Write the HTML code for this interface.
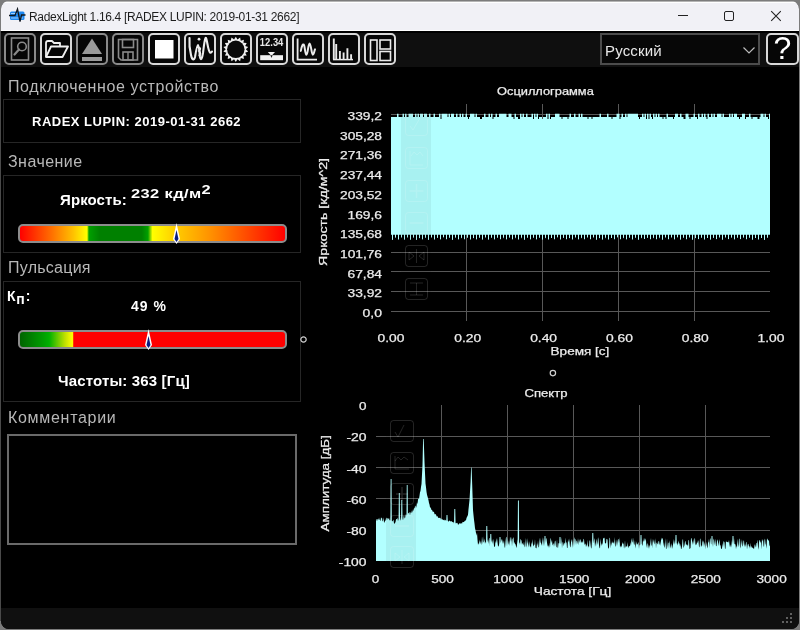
<!DOCTYPE html>
<html><head><meta charset="utf-8">
<style>
*{margin:0;padding:0;box-sizing:border-box}
html,body{width:800px;height:630px;overflow:hidden;background:#7c7c7c;font-family:"Liberation Sans",sans-serif}
#win{will-change:transform;position:absolute;left:1px;top:1px;width:798px;height:628px;border-radius:8px;overflow:hidden;background:#000}
.abs{position:absolute}
#title{position:absolute;left:0;top:0;width:798px;height:30px;background:#f1f1f6;border-bottom:1px solid #fff;border-top:1px solid #b4b4b4;box-shadow:inset 0 1px 0 #fff}
#ttxt{position:absolute;left:28px;top:8px;font-size:12px;color:#1e1e1e;white-space:nowrap;letter-spacing:-0.32px}
#toolbar{position:absolute;left:0;top:32px;width:798px;height:34px;background:#0f0f0f}
.btn{position:absolute;top:32px;width:32px;height:32px;border:2px solid #d8d8d8;border-radius:5px;background:#060606}
.btn.dis{border-color:#8a8a8a}
.btn svg{position:absolute;left:-2px;top:-2px}
.hdr{position:absolute;left:8px;font-size:16px;color:#b8b8b8;white-space:nowrap}
.box{position:absolute;left:2px;width:298px;border:1px solid #262626}
.bold{font-weight:bold;color:#fff;white-space:nowrap;position:absolute}
.bar{position:absolute;left:17px;width:269px;height:19px;border:2px solid #8c8c8c;border-radius:5px;overflow:hidden}
</style></head><body>
<div style="position:absolute;left:0;top:31px;width:1px;height:590px;background:#4a4a4a"></div>
<div id="win">
  <div id="title">
    <svg class="abs" style="left:8px;top:5px" width="18" height="16" viewBox="0 0 18 16">
      <rect x="1" y="4.5" width="14.5" height="8.5" rx="1.5" fill="#1e88f0"/>
      <rect x="2" y="6" width="6" height="1" fill="#9fd0ff"/>
      <rect x="2" y="10.5" width="12" height="1" fill="#9fd0ff"/>
      <polyline points="0,8.5 6,8.5 8.5,2 11,14.5 12.5,8 16.5,8" fill="none" stroke="#101820" stroke-width="1.3"/>
    </svg>
    <div id="ttxt">RadexLight 1.16.4 [RADEX LUPIN: 2019-01-31 2662]</div>
    <div class="abs" style="left:677px;top:13px;width:10px;height:1px;background:#222"></div>
    <div class="abs" style="left:723px;top:9px;width:10px;height:10px;border:1px solid #222;border-radius:2px"></div>
    <svg class="abs" style="left:769px;top:8px" width="12" height="12" viewBox="0 0 12 12"><path d="M1.2,1.2 L10.8,10.8 M10.8,1.2 L1.2,10.8" stroke="#222" stroke-width="1.1"/></svg>
  </div>
  <div id="toolbar"></div>

  <!-- toolbar buttons: window coords = page - 1 -->
  <div class="btn dis" style="left:3px">
    <svg width="32" height="32" viewBox="0 0 32 32"><rect x="7.5" y="5" width="17" height="22" fill="none" stroke="#8a8a8a" stroke-width="1.6"/><circle cx="18" cy="13.5" r="4.3" fill="none" stroke="#8a8a8a" stroke-width="1.6"/><path d="M15,16.5 L10.5,21.5" stroke="#8a8a8a" stroke-width="2.2" stroke-linecap="round"/></svg>
  </div>
  <div class="btn" style="left:39px">
    <svg width="32" height="32" viewBox="0 0 32 32"><path d="M6,24 L6,10 Q6,8 8,8 L12,8 L14,10 L20,10 L20,13" fill="none" stroke="#f0f0f0" stroke-width="1.8" stroke-linejoin="round"/><path d="M6,24 L11,13.5 L28,13.5 L22.5,24 Z" fill="none" stroke="#f0f0f0" stroke-width="1.8" stroke-linejoin="round"/></svg>
  </div>
  <div class="btn dis" style="left:75px">
    <svg width="32" height="32" viewBox="0 0 32 32"><path d="M16,5.5 L26,21 L6,21 Z" fill="#9a9a9a"/><rect x="6" y="24" width="20" height="4" fill="#9a9a9a"/></svg>
  </div>
  <div class="btn dis" style="left:111px">
    <svg width="32" height="32" viewBox="0 0 32 32"><path d="M6.5,6.5 L25.5,6.5 L25.5,27 L9,27 L6.5,24.5 Z" fill="none" stroke="#8a8a8a" stroke-width="1.6"/><rect x="10.5" y="6.5" width="11" height="8" fill="none" stroke="#8a8a8a" stroke-width="1.6"/><rect x="11" y="19" width="10" height="8" fill="none" stroke="#8a8a8a" stroke-width="1.6"/><path d="M16,19 L16,27" stroke="#8a8a8a" stroke-width="1.4"/></svg>
  </div>
  <div class="btn" style="left:147px">
    <svg width="32" height="32" viewBox="0 0 32 32"><rect x="7" y="7" width="18.5" height="18.5" fill="#fff"/></svg>
  </div>
  <div class="btn" style="left:183px">
    <svg width="32" height="32" viewBox="0 0 32 32"><path d="M5.5,5 C5,12 6,18 7,22 C8,27 10,28 11,24 C12,18 13,12 14,12 C15,12 15.5,20 16,24 C17,28 18,26 19,20 C20,12 21,4 22,5 C23,6 24,18 26,19.5 C27,20 27.5,19 28,18.5" fill="none" stroke="#ececec" stroke-width="2.1" stroke-linecap="round"/><circle cx="15" cy="6.2" r="1.4" fill="#ececec"/><path d="M14,14.5 C17,14 17,17 15,18 C17,19 17,22 14.5,22.5" fill="none" stroke="#ececec" stroke-width="1.5"/></svg>
  </div>
  <div class="btn" style="left:219px">
    <svg width="32" height="32" viewBox="0 0 32 32"><path d="M15.80,3.70 L17.54,6.45 L20.11,4.46 L20.80,7.64 L23.90,6.65 L23.46,9.87 L26.71,10.00 L25.20,12.88 L28.21,14.11 L25.80,16.30 L28.21,18.49 L25.20,19.72 L26.71,22.60 L23.46,22.73 L23.90,25.95 L20.80,24.96 L20.11,28.14 L17.54,26.15 L15.80,28.90 L14.06,26.15 L11.49,28.14 L10.80,24.96 L7.70,25.95 L8.14,22.73 L4.89,22.60 L6.40,19.72 L3.39,18.49 L5.80,16.30 L3.39,14.11 L6.40,12.88 L4.89,10.00 L8.14,9.87 L7.70,6.65 L10.80,7.64 L11.49,4.46 L14.06,6.45 Z" fill="#f0f0f0"/><circle cx="15.8" cy="16.3" r="8.7" fill="#0a0a0a"/></svg>
  </div>
  <div class="btn" style="left:255px">
    <svg width="32" height="32" viewBox="0 0 32 32"><text x="15.6" y="13.4" font-family="Liberation Sans" font-size="10.4" font-weight="bold" fill="#e8e8e8" text-anchor="middle" textLength="23.5" lengthAdjust="spacingAndGlyphs">12.34</text><rect x="4.2" y="22.2" width="22.8" height="5" fill="#f0f0f0"/><path d="M11.8,19 L19,19 L15.4,23 Z" fill="#f0f0f0"/><path d="M14.4,22.2 L16.6,22.2 L15.5,25 Z" fill="#111"/></svg>
  </div>
  <div class="btn" style="left:291px">
    <svg width="32" height="32" viewBox="0 0 32 32"><path d="M5.6,5.5 L5.6,26.6 L25,26.6" fill="none" stroke="#eaeaea" stroke-width="1.8"/><path d="M8.8,17.9 C10,12 11,11 11.8,11.5 C13,13 13,21.7 14.4,21.7 C16,21.7 16,10.4 17.6,10.4 C19,10.4 19.5,21.7 20.8,21.7 C22,21.7 22.5,17 23,16.3" fill="none" stroke="#eaeaea" stroke-width="2" stroke-linecap="round"/></svg>
  </div>
  <div class="btn" style="left:327px">
    <svg width="32" height="32" viewBox="0 0 32 32"><path d="M5,26.6 L25,26.6" stroke="#eaeaea" stroke-width="1.5"/><path d="M5.8,5.5 V26.6 M8.2,10.9 V26.6 M11.9,17.9 V26.6 M15.6,19.5 V26.6 M19.4,15.2 V26.6 M23.1,21.2 V26.6" stroke="#eaeaea" stroke-width="1.9"/></svg>
  </div>
  <div class="btn" style="left:363px">
    <svg width="32" height="32" viewBox="0 0 32 32"><rect x="6.5" y="7" width="6.5" height="20.5" fill="none" stroke="#eaeaea" stroke-width="1.6"/><rect x="16" y="7" width="10.5" height="9" fill="none" stroke="#eaeaea" stroke-width="1.6"/><rect x="16" y="18.5" width="10.5" height="9" fill="none" stroke="#eaeaea" stroke-width="1.6"/></svg>
  </div>

  <!-- language combo -->
  <div class="abs" style="left:599px;top:32px;width:160px;height:32px;border:2px solid #4c4c4c;background:#070707">
    <div class="abs" style="left:3px;top:7px;font-size:15px;color:#e8e8e8;letter-spacing:0.15px">Русский</div>
    <svg class="abs" style="left:140px;top:10px" width="14" height="10" viewBox="0 0 14 10"><path d="M1.5,2.5 L7,8 L12.5,2.5" fill="none" stroke="#bbb" stroke-width="1.2"/></svg>
  </div>
  <div class="btn" style="left:765px;width:33px">
    <div class="abs" style="left:0px;top:-5px;width:29px;text-align:center;font-size:32px;color:#fff">?</div>
  </div>

  <!-- left panel -->
  <div class="hdr" style="top:77px;left:7px;letter-spacing:0.6px">Подключенное устройство</div>
  <div class="box" style="top:98px;height:44px"></div>
  <div class="bold" style="left:31px;top:113px;font-size:13px;letter-spacing:0.5px">RADEX LUPIN: 2019-01-31 2662</div>

  <div class="hdr" style="top:152px;left:7px;letter-spacing:0.45px">Значение</div>
  <div class="box" style="top:174px;height:78px"></div>
  <div class="bold" style="left:59px;top:190px;font-size:15px;letter-spacing:0.1px">Яркость:</div>
  <div class="bold" style="left:130px;top:185px;font-size:13.5px;letter-spacing:0.3px;transform:scaleX(1.22);transform-origin:0 0">232 кд/м<span style="position:relative;top:-4px;letter-spacing:0">2</span></div>
  <div class="bar" style="top:223px;background:linear-gradient(to right,#ff0000 0%,#ff7000 12%,#ffc000 20%,#ffff00 25.3%,#00a000 26%,#008000 30%,#008000 46%,#00a000 48.3%,#ffff00 50%,#ffd000 58%,#ff9000 72%,#ff0000 100%)"></div>
  <svg class="abs" style="left:169px;top:221px" width="14" height="23" viewBox="0 0 14 23"><path d="M6.5,1 L10,17 L6.5,22 L3,17 Z" fill="#fff"/><path d="M6.5,8 L8.5,17 L6.5,20 L4.5,17 Z" fill="#0a1a80"/></svg>

  <div class="hdr" style="top:258px;left:7px;letter-spacing:0.25px">Пульсация</div>
  <div class="box" style="top:280px;height:121px"></div>
  <div class="bold" style="left:6px;top:287px;font-size:14px;letter-spacing:0.8px">К<span style="position:relative;top:3px">п</span>:</div>
  <div class="bold" style="left:130px;top:297px;font-size:14px;letter-spacing:1px">49 %</div>
  <div class="bar" style="top:329px;background:linear-gradient(to right,#006400 0%,#00a000 9%,#00b000 11%,#c0e000 17%,#ffff00 19.8%,#ff0000 20.3%,#ff0000 100%)"></div>
  <svg class="abs" style="left:141px;top:327px" width="14" height="23" viewBox="0 0 14 23"><path d="M6.5,1 L10,17 L6.5,22 L3,17 Z" fill="#fff"/><path d="M6.5,8 L8.5,17 L6.5,20 L4.5,17 Z" fill="#0a1a80"/></svg>
  <svg class="abs" style="left:298px;top:334px" width="10" height="10"><circle cx="4.5" cy="4.5" r="2.7" fill="none" stroke="#d0d0d0" stroke-width="1.2"/></svg>
  <div class="bold" style="left:57px;top:371px;font-size:15px;letter-spacing:0.15px">Частоты: 363 [Гц]</div>

  <div class="hdr" style="top:408px;left:7px;letter-spacing:0.7px">Комментарии</div>
  <div class="abs" style="left:6px;top:433px;width:290px;height:111px;border:2px solid #6a6a6a"></div>

  <!-- status bar -->
  <div class="abs" style="left:0;top:607px;width:798px;height:21px;background:#101010"></div>
  <svg class="abs" style="left:779px;top:610px" width="14" height="14"><g fill="#606060"><rect x="10" y="2" width="2" height="2"/><rect x="6" y="6" width="2" height="2"/><rect x="10" y="6" width="2" height="2"/><rect x="2" y="10" width="2" height="2"/><rect x="6" y="10" width="2" height="2"/><rect x="10" y="10" width="2" height="2"/></g></svg>

  <!-- charts: SVG in page coords, shifted -1 -->
  <svg class="abs" style="left:-1px;top:-1px" width="800" height="630" viewBox="0 0 800 630">
    <g stroke="#585858" stroke-width="1">
      <path d="M391,114.5 H770 M391,134.5 H770 M391,153.5 H770 M391,173.5 H770 M391,193.5 H770 M391,212.5 H770 M391,232.5 H770 M391,252.5 H770 M391,271.5 H770 M391,291.5 H770 M391,311.5 H770"/>
      <path d="M466.5,104 V321 M542.5,104 V321 M618.5,104 V321 M694.5,104 V321"/>
    </g>
    <path d="M391.0,117.0 L391.0,117.0 L391.5,117.0 L391.5,117.0 L392.0,117.0 L392.0,117.0 L392.5,117.0 L392.5,117.0 L393.0,117.0 L393.0,117.0 L393.5,117.0 L393.5,117.0 L394.0,117.0 L394.0,117.0 L394.5,117.0 L394.5,117.0 L395.0,117.0 L395.0,117.0 L395.5,117.0 L395.5,117.0 L396.0,117.0 L396.0,117.0 L396.5,117.0 L396.5,117.0 L397.0,117.0 L397.0,113.8 L397.5,113.8 L397.5,113.8 L398.0,113.8 L398.0,113.8 L398.5,113.8 L398.5,117.0 L399.0,117.0 L399.0,117.0 L399.5,117.0 L399.5,117.0 L400.0,117.0 L400.0,117.0 L400.5,117.0 L400.5,117.0 L401.0,117.0 L401.0,117.0 L401.5,117.0 L401.5,117.0 L402.0,117.0 L402.0,117.0 L402.5,117.0 L402.5,113.8 L403.0,113.8 L403.0,113.8 L403.5,113.8 L403.5,113.8 L404.0,113.8 L404.0,117.0 L404.5,117.0 L404.5,117.0 L405.0,117.0 L405.0,113.8 L405.5,113.8 L405.5,113.8 L406.0,113.8 L406.0,113.8 L406.5,113.8 L406.5,117.0 L407.0,117.0 L407.0,117.0 L407.5,117.0 L407.5,117.0 L408.0,117.0 L408.0,117.0 L408.5,117.0 L408.5,113.8 L409.0,113.8 L409.0,113.8 L409.5,113.8 L409.5,113.8 L410.0,113.8 L410.0,113.8 L410.5,113.8 L410.5,113.8 L411.0,113.8 L411.0,113.8 L411.5,113.8 L411.5,113.8 L412.0,113.8 L412.0,113.8 L412.5,113.8 L412.5,113.8 L413.0,113.8 L413.0,117.0 L413.5,117.0 L413.5,117.0 L414.0,117.0 L414.0,117.0 L414.5,117.0 L414.5,117.0 L415.0,117.0 L415.0,113.8 L415.5,113.8 L415.5,113.8 L416.0,113.8 L416.0,113.8 L416.5,113.8 L416.5,117.0 L417.0,117.0 L417.0,117.0 L417.5,117.0 L417.5,113.8 L418.0,113.8 L418.0,113.8 L418.5,113.8 L418.5,113.8 L419.0,113.8 L419.0,117.0 L419.5,117.0 L419.5,117.0 L420.0,117.0 L420.0,113.8 L420.5,113.8 L420.5,113.8 L421.0,113.8 L421.0,113.8 L421.5,113.8 L421.5,113.8 L422.0,113.8 L422.0,113.8 L422.5,113.8 L422.5,113.8 L423.0,113.8 L423.0,117.0 L423.5,117.0 L423.5,117.0 L424.0,117.0 L424.0,113.8 L424.5,113.8 L424.5,113.8 L425.0,113.8 L425.0,113.8 L425.5,113.8 L425.5,113.8 L426.0,113.8 L426.0,113.8 L426.5,113.8 L426.5,113.8 L427.0,113.8 L427.0,117.0 L427.5,117.0 L427.5,117.0 L428.0,117.0 L428.0,117.0 L428.5,117.0 L428.5,117.0 L429.0,117.0 L429.0,113.8 L429.5,113.8 L429.5,113.8 L430.0,113.8 L430.0,113.8 L430.5,113.8 L430.5,117.0 L431.0,117.0 L431.0,117.0 L431.5,117.0 L431.5,117.0 L432.0,117.0 L432.0,117.0 L432.5,117.0 L432.5,117.0 L433.0,117.0 L433.0,117.0 L433.5,117.0 L433.5,113.8 L434.0,113.8 L434.0,113.8 L434.5,113.8 L434.5,113.8 L435.0,113.8 L435.0,117.0 L435.5,117.0 L435.5,117.0 L436.0,117.0 L436.0,117.0 L436.5,117.0 L436.5,117.0 L437.0,117.0 L437.0,117.0 L437.5,117.0 L437.5,117.0 L438.0,117.0 L438.0,117.0 L438.5,117.0 L438.5,117.0 L439.0,117.0 L439.0,113.8 L439.5,113.8 L439.5,113.8 L440.0,113.8 L440.0,113.8 L440.5,113.8 L440.5,119.0 L441.0,119.0 L441.0,119.0 L441.5,119.0 L441.5,113.8 L442.0,113.8 L442.0,113.8 L442.5,113.8 L442.5,113.8 L443.0,113.8 L443.0,113.8 L443.5,113.8 L443.5,113.8 L444.0,113.8 L444.0,113.8 L444.5,113.8 L444.5,113.8 L445.0,113.8 L445.0,113.8 L445.5,113.8 L445.5,113.8 L446.0,113.8 L446.0,113.8 L446.5,113.8 L446.5,113.8 L447.0,113.8 L447.0,113.8 L447.5,113.8 L447.5,117.0 L448.0,117.0 L448.0,117.0 L448.5,117.0 L448.5,113.8 L449.0,113.8 L449.0,113.8 L449.5,113.8 L449.5,113.8 L450.0,113.8 L450.0,117.0 L450.5,117.0 L450.5,117.0 L451.0,117.0 L451.0,113.8 L451.5,113.8 L451.5,113.8 L452.0,113.8 L452.0,113.8 L452.5,113.8 L452.5,113.8 L453.0,113.8 L453.0,113.8 L453.5,113.8 L453.5,113.8 L454.0,113.8 L454.0,117.0 L454.5,117.0 L454.5,117.0 L455.0,117.0 L455.0,117.0 L455.5,117.0 L455.5,117.0 L456.0,117.0 L456.0,113.8 L456.5,113.8 L456.5,113.8 L457.0,113.8 L457.0,113.8 L457.5,113.8 L457.5,117.0 L458.0,117.0 L458.0,117.0 L458.5,117.0 L458.5,117.0 L459.0,117.0 L459.0,117.0 L459.5,117.0 L459.5,113.8 L460.0,113.8 L460.0,113.8 L460.5,113.8 L460.5,113.8 L461.0,113.8 L461.0,117.0 L461.5,117.0 L461.5,117.0 L462.0,117.0 L462.0,113.8 L462.5,113.8 L462.5,113.8 L463.0,113.8 L463.0,113.8 L463.5,113.8 L463.5,117.0 L464.0,117.0 L464.0,117.0 L464.5,117.0 L464.5,117.0 L465.0,117.0 L465.0,117.0 L465.5,117.0 L465.5,113.8 L466.0,113.8 L466.0,113.8 L466.5,113.8 L466.5,113.8 L467.0,113.8 L467.0,117.0 L467.5,117.0 L467.5,117.0 L468.0,117.0 L468.0,119.0 L468.5,119.0 L468.5,119.0 L469.0,119.0 L469.0,117.0 L469.5,117.0 L469.5,117.0 L470.0,117.0 L470.0,113.8 L470.5,113.8 L470.5,113.8 L471.0,113.8 L471.0,113.8 L471.5,113.8 L471.5,113.8 L472.0,113.8 L472.0,113.8 L472.5,113.8 L472.5,113.8 L473.0,113.8 L473.0,113.8 L473.5,113.8 L473.5,113.8 L474.0,113.8 L474.0,113.8 L474.5,113.8 L474.5,117.0 L475.0,117.0 L475.0,117.0 L475.5,117.0 L475.5,113.8 L476.0,113.8 L476.0,113.8 L476.5,113.8 L476.5,113.8 L477.0,113.8 L477.0,117.0 L477.5,117.0 L477.5,117.0 L478.0,117.0 L478.0,117.0 L478.5,117.0 L478.5,117.0 L479.0,117.0 L479.0,117.0 L479.5,117.0 L479.5,117.0 L480.0,117.0 L480.0,119.0 L480.5,119.0 L480.5,119.0 L481.0,119.0 L481.0,119.0 L481.5,119.0 L481.5,119.0 L482.0,119.0 L482.0,117.0 L482.5,117.0 L482.5,117.0 L483.0,117.0 L483.0,117.0 L483.5,117.0 L483.5,117.0 L484.0,117.0 L484.0,113.8 L484.5,113.8 L484.5,113.8 L485.0,113.8 L485.0,113.8 L485.5,113.8 L485.5,117.0 L486.0,117.0 L486.0,117.0 L486.5,117.0 L486.5,117.0 L487.0,117.0 L487.0,117.0 L487.5,117.0 L487.5,117.0 L488.0,117.0 L488.0,117.0 L488.5,117.0 L488.5,113.8 L489.0,113.8 L489.0,113.8 L489.5,113.8 L489.5,113.8 L490.0,113.8 L490.0,117.0 L490.5,117.0 L490.5,117.0 L491.0,117.0 L491.0,113.8 L491.5,113.8 L491.5,113.8 L492.0,113.8 L492.0,113.8 L492.5,113.8 L492.5,119.0 L493.0,119.0 L493.0,119.0 L493.5,119.0 L493.5,117.0 L494.0,117.0 L494.0,117.0 L494.5,117.0 L494.5,117.0 L495.0,117.0 L495.0,117.0 L495.5,117.0 L495.5,113.8 L496.0,113.8 L496.0,113.8 L496.5,113.8 L496.5,113.8 L497.0,113.8 L497.0,117.0 L497.5,117.0 L497.5,117.0 L498.0,117.0 L498.0,117.0 L498.5,117.0 L498.5,117.0 L499.0,117.0 L499.0,113.8 L499.5,113.8 L499.5,113.8 L500.0,113.8 L500.0,113.8 L500.5,113.8 L500.5,113.8 L501.0,113.8 L501.0,113.8 L501.5,113.8 L501.5,113.8 L502.0,113.8 L502.0,113.8 L502.5,113.8 L502.5,113.8 L503.0,113.8 L503.0,113.8 L503.5,113.8 L503.5,113.8 L504.0,113.8 L504.0,113.8 L504.5,113.8 L504.5,113.8 L505.0,113.8 L505.0,113.8 L505.5,113.8 L505.5,113.8 L506.0,113.8 L506.0,113.8 L506.5,113.8 L506.5,117.0 L507.0,117.0 L507.0,117.0 L507.5,117.0 L507.5,117.0 L508.0,117.0 L508.0,117.0 L508.5,117.0 L508.5,113.8 L509.0,113.8 L509.0,113.8 L509.5,113.8 L509.5,113.8 L510.0,113.8 L510.0,113.8 L510.5,113.8 L510.5,113.8 L511.0,113.8 L511.0,113.8 L511.5,113.8 L511.5,117.0 L512.0,117.0 L512.0,117.0 L512.5,117.0 L512.5,117.0 L513.0,117.0 L513.0,117.0 L513.5,117.0 L513.5,119.0 L514.0,119.0 L514.0,119.0 L514.5,119.0 L514.5,113.8 L515.0,113.8 L515.0,113.8 L515.5,113.8 L515.5,113.8 L516.0,113.8 L516.0,117.0 L516.5,117.0 L516.5,117.0 L517.0,117.0 L517.0,117.0 L517.5,117.0 L517.5,117.0 L518.0,117.0 L518.0,119.0 L518.5,119.0 L518.5,119.0 L519.0,119.0 L519.0,119.0 L519.5,119.0 L519.5,119.0 L520.0,119.0 L520.0,113.8 L520.5,113.8 L520.5,113.8 L521.0,113.8 L521.0,113.8 L521.5,113.8 L521.5,117.0 L522.0,117.0 L522.0,117.0 L522.5,117.0 L522.5,113.8 L523.0,113.8 L523.0,113.8 L523.5,113.8 L523.5,113.8 L524.0,113.8 L524.0,117.0 L524.5,117.0 L524.5,117.0 L525.0,117.0 L525.0,117.0 L525.5,117.0 L525.5,117.0 L526.0,117.0 L526.0,113.8 L526.5,113.8 L526.5,113.8 L527.0,113.8 L527.0,113.8 L527.5,113.8 L527.5,117.0 L528.0,117.0 L528.0,117.0 L528.5,117.0 L528.5,117.0 L529.0,117.0 L529.0,117.0 L529.5,117.0 L529.5,117.0 L530.0,117.0 L530.0,117.0 L530.5,117.0 L530.5,117.0 L531.0,117.0 L531.0,117.0 L531.5,117.0 L531.5,113.8 L532.0,113.8 L532.0,113.8 L532.5,113.8 L532.5,113.8 L533.0,113.8 L533.0,119.0 L533.5,119.0 L533.5,119.0 L534.0,119.0 L534.0,113.8 L534.5,113.8 L534.5,113.8 L535.0,113.8 L535.0,113.8 L535.5,113.8 L535.5,117.0 L536.0,117.0 L536.0,117.0 L536.5,117.0 L536.5,113.8 L537.0,113.8 L537.0,113.8 L537.5,113.8 L537.5,113.8 L538.0,113.8 L538.0,119.0 L538.5,119.0 L538.5,119.0 L539.0,119.0 L539.0,117.0 L539.5,117.0 L539.5,117.0 L540.0,117.0 L540.0,117.0 L540.5,117.0 L540.5,117.0 L541.0,117.0 L541.0,117.0 L541.5,117.0 L541.5,117.0 L542.0,117.0 L542.0,119.0 L542.5,119.0 L542.5,119.0 L543.0,119.0 L543.0,117.0 L543.5,117.0 L543.5,117.0 L544.0,117.0 L544.0,117.0 L544.5,117.0 L544.5,117.0 L545.0,117.0 L545.0,117.0 L545.5,117.0 L545.5,117.0 L546.0,117.0 L546.0,113.8 L546.5,113.8 L546.5,113.8 L547.0,113.8 L547.0,113.8 L547.5,113.8 L547.5,119.0 L548.0,119.0 L548.0,119.0 L548.5,119.0 L548.5,113.8 L549.0,113.8 L549.0,113.8 L549.5,113.8 L549.5,113.8 L550.0,113.8 L550.0,119.0 L550.5,119.0 L550.5,119.0 L551.0,119.0 L551.0,117.0 L551.5,117.0 L551.5,117.0 L552.0,117.0 L552.0,117.0 L552.5,117.0 L552.5,117.0 L553.0,117.0 L553.0,117.0 L553.5,117.0 L553.5,117.0 L554.0,117.0 L554.0,117.0 L554.5,117.0 L554.5,117.0 L555.0,117.0 L555.0,113.8 L555.5,113.8 L555.5,113.8 L556.0,113.8 L556.0,113.8 L556.5,113.8 L556.5,113.8 L557.0,113.8 L557.0,113.8 L557.5,113.8 L557.5,113.8 L558.0,113.8 L558.0,113.8 L558.5,113.8 L558.5,113.8 L559.0,113.8 L559.0,113.8 L559.5,113.8 L559.5,117.0 L560.0,117.0 L560.0,117.0 L560.5,117.0 L560.5,117.0 L561.0,117.0 L561.0,117.0 L561.5,117.0 L561.5,119.0 L562.0,119.0 L562.0,119.0 L562.5,119.0 L562.5,117.0 L563.0,117.0 L563.0,117.0 L563.5,117.0 L563.5,117.0 L564.0,117.0 L564.0,117.0 L564.5,117.0 L564.5,117.0 L565.0,117.0 L565.0,117.0 L565.5,117.0 L565.5,117.0 L566.0,117.0 L566.0,117.0 L566.5,117.0 L566.5,117.0 L567.0,117.0 L567.0,117.0 L567.5,117.0 L567.5,119.0 L568.0,119.0 L568.0,119.0 L568.5,119.0 L568.5,117.0 L569.0,117.0 L569.0,117.0 L569.5,117.0 L569.5,113.8 L570.0,113.8 L570.0,113.8 L570.5,113.8 L570.5,113.8 L571.0,113.8 L571.0,117.0 L571.5,117.0 L571.5,117.0 L572.0,117.0 L572.0,117.0 L572.5,117.0 L572.5,117.0 L573.0,117.0 L573.0,117.0 L573.5,117.0 L573.5,117.0 L574.0,117.0 L574.0,113.8 L574.5,113.8 L574.5,113.8 L575.0,113.8 L575.0,113.8 L575.5,113.8 L575.5,117.0 L576.0,117.0 L576.0,117.0 L576.5,117.0 L576.5,117.0 L577.0,117.0 L577.0,117.0 L577.5,117.0 L577.5,117.0 L578.0,117.0 L578.0,117.0 L578.5,117.0 L578.5,113.8 L579.0,113.8 L579.0,113.8 L579.5,113.8 L579.5,113.8 L580.0,113.8 L580.0,117.0 L580.5,117.0 L580.5,117.0 L581.0,117.0 L581.0,113.8 L581.5,113.8 L581.5,113.8 L582.0,113.8 L582.0,113.8 L582.5,113.8 L582.5,117.0 L583.0,117.0 L583.0,117.0 L583.5,117.0 L583.5,117.0 L584.0,117.0 L584.0,117.0 L584.5,117.0 L584.5,117.0 L585.0,117.0 L585.0,117.0 L585.5,117.0 L585.5,117.0 L586.0,117.0 L586.0,117.0 L586.5,117.0 L586.5,117.0 L587.0,117.0 L587.0,117.0 L587.5,117.0 L587.5,119.0 L588.0,119.0 L588.0,119.0 L588.5,119.0 L588.5,117.0 L589.0,117.0 L589.0,117.0 L589.5,117.0 L589.5,117.0 L590.0,117.0 L590.0,117.0 L590.5,117.0 L590.5,117.0 L591.0,117.0 L591.0,117.0 L591.5,117.0 L591.5,119.0 L592.0,119.0 L592.0,119.0 L592.5,119.0 L592.5,117.0 L593.0,117.0 L593.0,117.0 L593.5,117.0 L593.5,117.0 L594.0,117.0 L594.0,117.0 L594.5,117.0 L594.5,117.0 L595.0,117.0 L595.0,117.0 L595.5,117.0 L595.5,117.0 L596.0,117.0 L596.0,117.0 L596.5,117.0 L596.5,117.0 L597.0,117.0 L597.0,117.0 L597.5,117.0 L597.5,117.0 L598.0,117.0 L598.0,117.0 L598.5,117.0 L598.5,117.0 L599.0,117.0 L599.0,117.0 L599.5,117.0 L599.5,113.8 L600.0,113.8 L600.0,113.8 L600.5,113.8 L600.5,113.8 L601.0,113.8 L601.0,117.0 L601.5,117.0 L601.5,117.0 L602.0,117.0 L602.0,117.0 L602.5,117.0 L602.5,117.0 L603.0,117.0 L603.0,117.0 L603.5,117.0 L603.5,117.0 L604.0,117.0 L604.0,117.0 L604.5,117.0 L604.5,117.0 L605.0,117.0 L605.0,117.0 L605.5,117.0 L605.5,117.0 L606.0,117.0 L606.0,117.0 L606.5,117.0 L606.5,117.0 L607.0,117.0 L607.0,113.8 L607.5,113.8 L607.5,113.8 L608.0,113.8 L608.0,113.8 L608.5,113.8 L608.5,117.0 L609.0,117.0 L609.0,117.0 L609.5,117.0 L609.5,117.0 L610.0,117.0 L610.0,117.0 L610.5,117.0 L610.5,117.0 L611.0,117.0 L611.0,117.0 L611.5,117.0 L611.5,119.0 L612.0,119.0 L612.0,119.0 L612.5,119.0 L612.5,117.0 L613.0,117.0 L613.0,117.0 L613.5,117.0 L613.5,117.0 L614.0,117.0 L614.0,117.0 L614.5,117.0 L614.5,117.0 L615.0,117.0 L615.0,117.0 L615.5,117.0 L615.5,117.0 L616.0,117.0 L616.0,117.0 L616.5,117.0 L616.5,113.8 L617.0,113.8 L617.0,113.8 L617.5,113.8 L617.5,113.8 L618.0,113.8 L618.0,113.8 L618.5,113.8 L618.5,113.8 L619.0,113.8 L619.0,113.8 L619.5,113.8 L619.5,119.0 L620.0,119.0 L620.0,119.0 L620.5,119.0 L620.5,117.0 L621.0,117.0 L621.0,117.0 L621.5,117.0 L621.5,113.8 L622.0,113.8 L622.0,113.8 L622.5,113.8 L622.5,113.8 L623.0,113.8 L623.0,117.0 L623.5,117.0 L623.5,117.0 L624.0,117.0 L624.0,117.0 L624.5,117.0 L624.5,117.0 L625.0,117.0 L625.0,113.8 L625.5,113.8 L625.5,113.8 L626.0,113.8 L626.0,113.8 L626.5,113.8 L626.5,117.0 L627.0,117.0 L627.0,117.0 L627.5,117.0 L627.5,113.8 L628.0,113.8 L628.0,113.8 L628.5,113.8 L628.5,113.8 L629.0,113.8 L629.0,113.8 L629.5,113.8 L629.5,113.8 L630.0,113.8 L630.0,113.8 L630.5,113.8 L630.5,113.8 L631.0,113.8 L631.0,113.8 L631.5,113.8 L631.5,113.8 L632.0,113.8 L632.0,113.8 L632.5,113.8 L632.5,113.8 L633.0,113.8 L633.0,113.8 L633.5,113.8 L633.5,113.8 L634.0,113.8 L634.0,113.8 L634.5,113.8 L634.5,113.8 L635.0,113.8 L635.0,113.8 L635.5,113.8 L635.5,113.8 L636.0,113.8 L636.0,113.8 L636.5,113.8 L636.5,113.8 L637.0,113.8 L637.0,113.8 L637.5,113.8 L637.5,113.8 L638.0,113.8 L638.0,117.0 L638.5,117.0 L638.5,117.0 L639.0,117.0 L639.0,119.0 L639.5,119.0 L639.5,119.0 L640.0,119.0 L640.0,117.0 L640.5,117.0 L640.5,117.0 L641.0,117.0 L641.0,117.0 L641.5,117.0 L641.5,117.0 L642.0,117.0 L642.0,113.8 L642.5,113.8 L642.5,113.8 L643.0,113.8 L643.0,113.8 L643.5,113.8 L643.5,117.0 L644.0,117.0 L644.0,117.0 L644.5,117.0 L644.5,113.8 L645.0,113.8 L645.0,113.8 L645.5,113.8 L645.5,113.8 L646.0,113.8 L646.0,119.0 L646.5,119.0 L646.5,119.0 L647.0,119.0 L647.0,113.8 L647.5,113.8 L647.5,113.8 L648.0,113.8 L648.0,113.8 L648.5,113.8 L648.5,119.0 L649.0,119.0 L649.0,119.0 L649.5,119.0 L649.5,113.8 L650.0,113.8 L650.0,113.8 L650.5,113.8 L650.5,113.8 L651.0,113.8 L651.0,117.0 L651.5,117.0 L651.5,117.0 L652.0,117.0 L652.0,119.0 L652.5,119.0 L652.5,119.0 L653.0,119.0 L653.0,113.8 L653.5,113.8 L653.5,113.8 L654.0,113.8 L654.0,113.8 L654.5,113.8 L654.5,117.0 L655.0,117.0 L655.0,117.0 L655.5,117.0 L655.5,113.8 L656.0,113.8 L656.0,113.8 L656.5,113.8 L656.5,113.8 L657.0,113.8 L657.0,117.0 L657.5,117.0 L657.5,117.0 L658.0,117.0 L658.0,113.8 L658.5,113.8 L658.5,113.8 L659.0,113.8 L659.0,113.8 L659.5,113.8 L659.5,117.0 L660.0,117.0 L660.0,117.0 L660.5,117.0 L660.5,117.0 L661.0,117.0 L661.0,117.0 L661.5,117.0 L661.5,117.0 L662.0,117.0 L662.0,117.0 L662.5,117.0 L662.5,119.0 L663.0,119.0 L663.0,119.0 L663.5,119.0 L663.5,117.0 L664.0,117.0 L664.0,117.0 L664.5,117.0 L664.5,117.0 L665.0,117.0 L665.0,117.0 L665.5,117.0 L665.5,119.0 L666.0,119.0 L666.0,119.0 L666.5,119.0 L666.5,113.8 L667.0,113.8 L667.0,113.8 L667.5,113.8 L667.5,113.8 L668.0,113.8 L668.0,117.0 L668.5,117.0 L668.5,117.0 L669.0,117.0 L669.0,117.0 L669.5,117.0 L669.5,117.0 L670.0,117.0 L670.0,117.0 L670.5,117.0 L670.5,117.0 L671.0,117.0 L671.0,117.0 L671.5,117.0 L671.5,117.0 L672.0,117.0 L672.0,117.0 L672.5,117.0 L672.5,117.0 L673.0,117.0 L673.0,119.0 L673.5,119.0 L673.5,119.0 L674.0,119.0 L674.0,117.0 L674.5,117.0 L674.5,117.0 L675.0,117.0 L675.0,113.8 L675.5,113.8 L675.5,113.8 L676.0,113.8 L676.0,113.8 L676.5,113.8 L676.5,113.8 L677.0,113.8 L677.0,113.8 L677.5,113.8 L677.5,113.8 L678.0,113.8 L678.0,117.0 L678.5,117.0 L678.5,117.0 L679.0,117.0 L679.0,117.0 L679.5,117.0 L679.5,117.0 L680.0,117.0 L680.0,113.8 L680.5,113.8 L680.5,113.8 L681.0,113.8 L681.0,113.8 L681.5,113.8 L681.5,117.0 L682.0,117.0 L682.0,117.0 L682.5,117.0 L682.5,117.0 L683.0,117.0 L683.0,117.0 L683.5,117.0 L683.5,119.0 L684.0,119.0 L684.0,119.0 L684.5,119.0 L684.5,119.0 L685.0,119.0 L685.0,119.0 L685.5,119.0 L685.5,113.8 L686.0,113.8 L686.0,113.8 L686.5,113.8 L686.5,113.8 L687.0,113.8 L687.0,113.8 L687.5,113.8 L687.5,113.8 L688.0,113.8 L688.0,113.8 L688.5,113.8 L688.5,117.0 L689.0,117.0 L689.0,117.0 L689.5,117.0 L689.5,119.0 L690.0,119.0 L690.0,119.0 L690.5,119.0 L690.5,117.0 L691.0,117.0 L691.0,117.0 L691.5,117.0 L691.5,117.0 L692.0,117.0 L692.0,117.0 L692.5,117.0 L692.5,117.0 L693.0,117.0 L693.0,117.0 L693.5,117.0 L693.5,113.8 L694.0,113.8 L694.0,113.8 L694.5,113.8 L694.5,113.8 L695.0,113.8 L695.0,117.0 L695.5,117.0 L695.5,117.0 L696.0,117.0 L696.0,117.0 L696.5,117.0 L696.5,117.0 L697.0,117.0 L697.0,119.0 L697.5,119.0 L697.5,119.0 L698.0,119.0 L698.0,113.8 L698.5,113.8 L698.5,113.8 L699.0,113.8 L699.0,113.8 L699.5,113.8 L699.5,117.0 L700.0,117.0 L700.0,117.0 L700.5,117.0 L700.5,117.0 L701.0,117.0 L701.0,117.0 L701.5,117.0 L701.5,113.8 L702.0,113.8 L702.0,113.8 L702.5,113.8 L702.5,113.8 L703.0,113.8 L703.0,117.0 L703.5,117.0 L703.5,117.0 L704.0,117.0 L704.0,113.8 L704.5,113.8 L704.5,113.8 L705.0,113.8 L705.0,113.8 L705.5,113.8 L705.5,117.0 L706.0,117.0 L706.0,117.0 L706.5,117.0 L706.5,119.0 L707.0,119.0 L707.0,119.0 L707.5,119.0 L707.5,113.8 L708.0,113.8 L708.0,113.8 L708.5,113.8 L708.5,113.8 L709.0,113.8 L709.0,117.0 L709.5,117.0 L709.5,117.0 L710.0,117.0 L710.0,117.0 L710.5,117.0 L710.5,117.0 L711.0,117.0 L711.0,113.8 L711.5,113.8 L711.5,113.8 L712.0,113.8 L712.0,113.8 L712.5,113.8 L712.5,117.0 L713.0,117.0 L713.0,117.0 L713.5,117.0 L713.5,113.8 L714.0,113.8 L714.0,113.8 L714.5,113.8 L714.5,113.8 L715.0,113.8 L715.0,117.0 L715.5,117.0 L715.5,117.0 L716.0,117.0 L716.0,117.0 L716.5,117.0 L716.5,117.0 L717.0,117.0 L717.0,113.8 L717.5,113.8 L717.5,113.8 L718.0,113.8 L718.0,113.8 L718.5,113.8 L718.5,113.8 L719.0,113.8 L719.0,113.8 L719.5,113.8 L719.5,113.8 L720.0,113.8 L720.0,113.8 L720.5,113.8 L720.5,113.8 L721.0,113.8 L721.0,113.8 L721.5,113.8 L721.5,117.0 L722.0,117.0 L722.0,117.0 L722.5,117.0 L722.5,113.8 L723.0,113.8 L723.0,113.8 L723.5,113.8 L723.5,113.8 L724.0,113.8 L724.0,117.0 L724.5,117.0 L724.5,117.0 L725.0,117.0 L725.0,117.0 L725.5,117.0 L725.5,117.0 L726.0,117.0 L726.0,117.0 L726.5,117.0 L726.5,117.0 L727.0,117.0 L727.0,117.0 L727.5,117.0 L727.5,117.0 L728.0,117.0 L728.0,117.0 L728.5,117.0 L728.5,117.0 L729.0,117.0 L729.0,113.8 L729.5,113.8 L729.5,113.8 L730.0,113.8 L730.0,113.8 L730.5,113.8 L730.5,117.0 L731.0,117.0 L731.0,117.0 L731.5,117.0 L731.5,113.8 L732.0,113.8 L732.0,113.8 L732.5,113.8 L732.5,113.8 L733.0,113.8 L733.0,117.0 L733.5,117.0 L733.5,117.0 L734.0,117.0 L734.0,113.8 L734.5,113.8 L734.5,113.8 L735.0,113.8 L735.0,113.8 L735.5,113.8 L735.5,113.8 L736.0,113.8 L736.0,113.8 L736.5,113.8 L736.5,113.8 L737.0,113.8 L737.0,117.0 L737.5,117.0 L737.5,117.0 L738.0,117.0 L738.0,117.0 L738.5,117.0 L738.5,117.0 L739.0,117.0 L739.0,119.0 L739.5,119.0 L739.5,119.0 L740.0,119.0 L740.0,117.0 L740.5,117.0 L740.5,117.0 L741.0,117.0 L741.0,117.0 L741.5,117.0 L741.5,117.0 L742.0,117.0 L742.0,113.8 L742.5,113.8 L742.5,113.8 L743.0,113.8 L743.0,113.8 L743.5,113.8 L743.5,113.8 L744.0,113.8 L744.0,113.8 L744.5,113.8 L744.5,113.8 L745.0,113.8 L745.0,119.0 L745.5,119.0 L745.5,119.0 L746.0,119.0 L746.0,117.0 L746.5,117.0 L746.5,117.0 L747.0,117.0 L747.0,117.0 L747.5,117.0 L747.5,117.0 L748.0,117.0 L748.0,117.0 L748.5,117.0 L748.5,117.0 L749.0,117.0 L749.0,113.8 L749.5,113.8 L749.5,113.8 L750.0,113.8 L750.0,113.8 L750.5,113.8 L750.5,117.0 L751.0,117.0 L751.0,117.0 L751.5,117.0 L751.5,119.0 L752.0,119.0 L752.0,119.0 L752.5,119.0 L752.5,117.0 L753.0,117.0 L753.0,117.0 L753.5,117.0 L753.5,117.0 L754.0,117.0 L754.0,117.0 L754.5,117.0 L754.5,117.0 L755.0,117.0 L755.0,117.0 L755.5,117.0 L755.5,117.0 L756.0,117.0 L756.0,117.0 L756.5,117.0 L756.5,117.0 L757.0,117.0 L757.0,117.0 L757.5,117.0 L757.5,119.0 L758.0,119.0 L758.0,119.0 L758.5,119.0 L758.5,119.0 L759.0,119.0 L759.0,119.0 L759.5,119.0 L759.5,117.0 L760.0,117.0 L760.0,117.0 L760.5,117.0 L760.5,113.8 L761.0,113.8 L761.0,113.8 L761.5,113.8 L761.5,113.8 L762.0,113.8 L762.0,113.8 L762.5,113.8 L762.5,113.8 L763.0,113.8 L763.0,113.8 L763.5,113.8 L763.5,117.0 L764.0,117.0 L764.0,117.0 L764.5,117.0 L764.5,113.8 L765.0,113.8 L765.0,113.8 L765.5,113.8 L765.5,113.8 L766.0,113.8 L766.0,117.0 L766.5,117.0 L766.5,117.0 L767.0,117.0 L767.0,117.0 L767.5,117.0 L767.5,117.0 L768.0,117.0 L768.0,119.0 L768.5,119.0 L768.5,119.0 L769.0,119.0 L769.0,113.8 L769.5,113.8 L769.5,113.8 L770.0,113.8 L770.0,234.8 L769.5,234.8 L769.5,234.8 L769.0,234.8 L769.0,234.8 L768.5,234.8 L768.5,234.8 L768.0,234.8 L768.0,237.6 L767.5,237.6 L767.5,238.0 L767.0,238.0 L767.0,234.8 L766.5,234.8 L766.5,234.8 L766.0,234.8 L766.0,234.8 L765.5,234.8 L765.5,234.8 L765.0,234.8 L765.0,239.7 L764.5,239.7 L764.5,240.0 L764.0,240.0 L764.0,234.8 L763.5,234.8 L763.5,234.8 L763.0,234.8 L763.0,234.8 L762.5,234.8 L762.5,234.8 L762.0,234.8 L762.0,238.0 L761.5,238.0 L761.5,238.1 L761.0,238.1 L761.0,234.8 L760.5,234.8 L760.5,234.8 L760.0,234.8 L760.0,234.8 L759.5,234.8 L759.5,234.8 L759.0,234.8 L759.0,239.4 L758.5,239.4 L758.5,239.6 L758.0,239.6 L758.0,234.8 L757.5,234.8 L757.5,234.8 L757.0,234.8 L757.0,234.8 L756.5,234.8 L756.5,234.8 L756.0,234.8 L756.0,238.1 L755.5,238.1 L755.5,238.0 L755.0,238.0 L755.0,234.8 L754.5,234.8 L754.5,234.8 L754.0,234.8 L754.0,234.8 L753.5,234.8 L753.5,234.8 L753.0,234.8 L753.0,239.9 L752.5,239.9 L752.5,239.6 L752.0,239.6 L752.0,234.8 L751.5,234.8 L751.5,234.8 L751.0,234.8 L751.0,234.8 L750.5,234.8 L750.5,234.8 L750.0,234.8 L750.0,238.1 L749.5,238.1 L749.5,237.6 L749.0,237.6 L749.0,234.8 L748.5,234.8 L748.5,234.8 L748.0,234.8 L748.0,234.8 L747.5,234.8 L747.5,234.8 L747.0,234.8 L747.0,239.4 L746.5,239.4 L746.5,239.1 L746.0,239.1 L746.0,234.8 L745.5,234.8 L745.5,234.8 L745.0,234.8 L745.0,234.8 L744.5,234.8 L744.5,234.8 L744.0,234.8 L744.0,237.7 L743.5,237.7 L743.5,237.6 L743.0,237.6 L743.0,234.8 L742.5,234.8 L742.5,234.8 L742.0,234.8 L742.0,234.8 L741.5,234.8 L741.5,234.8 L741.0,234.8 L741.0,239.2 L740.5,239.2 L740.5,239.0 L740.0,239.0 L740.0,234.8 L739.5,234.8 L739.5,234.8 L739.0,234.8 L739.0,234.8 L738.5,234.8 L738.5,234.8 L738.0,234.8 L738.0,238.0 L737.5,238.0 L737.5,237.4 L737.0,237.4 L737.0,234.8 L736.5,234.8 L736.5,234.8 L736.0,234.8 L736.0,234.8 L735.5,234.8 L735.5,234.8 L735.0,234.8 L735.0,239.2 L734.5,239.2 L734.5,239.6 L734.0,239.6 L734.0,234.8 L733.5,234.8 L733.5,234.8 L733.0,234.8 L733.0,234.8 L732.5,234.8 L732.5,234.8 L732.0,234.8 L732.0,237.7 L731.5,237.7 L731.5,237.4 L731.0,237.4 L731.0,234.8 L730.5,234.8 L730.5,234.8 L730.0,234.8 L730.0,234.8 L729.5,234.8 L729.5,234.8 L729.0,234.8 L729.0,239.2 L728.5,239.2 L728.5,239.1 L728.0,239.1 L728.0,234.8 L727.5,234.8 L727.5,234.8 L727.0,234.8 L727.0,234.8 L726.5,234.8 L726.5,234.8 L726.0,234.8 L726.0,237.4 L725.5,237.4 L725.5,237.6 L725.0,237.6 L725.0,234.8 L724.5,234.8 L724.5,234.8 L724.0,234.8 L724.0,234.8 L723.5,234.8 L723.5,234.8 L723.0,234.8 L723.0,239.8 L722.5,239.8 L722.5,239.8 L722.0,239.8 L722.0,234.8 L721.5,234.8 L721.5,234.8 L721.0,234.8 L721.0,234.8 L720.5,234.8 L720.5,234.8 L720.0,234.8 L720.0,237.4 L719.5,237.4 L719.5,237.6 L719.0,237.6 L719.0,234.8 L718.5,234.8 L718.5,234.8 L718.0,234.8 L718.0,234.8 L717.5,234.8 L717.5,234.8 L717.0,234.8 L717.0,239.1 L716.5,239.1 L716.5,239.2 L716.0,239.2 L716.0,234.8 L715.5,234.8 L715.5,234.8 L715.0,234.8 L715.0,234.8 L714.5,234.8 L714.5,234.8 L714.0,234.8 L714.0,238.1 L713.5,238.1 L713.5,237.7 L713.0,237.7 L713.0,234.8 L712.5,234.8 L712.5,234.8 L712.0,234.8 L712.0,234.8 L711.5,234.8 L711.5,234.8 L711.0,234.8 L711.0,239.3 L710.5,239.3 L710.5,239.9 L710.0,239.9 L710.0,234.8 L709.5,234.8 L709.5,234.8 L709.0,234.8 L709.0,234.8 L708.5,234.8 L708.5,234.8 L708.0,234.8 L708.0,238.0 L707.5,238.0 L707.5,237.9 L707.0,237.9 L707.0,234.8 L706.5,234.8 L706.5,234.8 L706.0,234.8 L706.0,234.8 L705.5,234.8 L705.5,234.8 L705.0,234.8 L705.0,239.4 L704.5,239.4 L704.5,239.6 L704.0,239.6 L704.0,234.8 L703.5,234.8 L703.5,234.8 L703.0,234.8 L703.0,234.8 L702.5,234.8 L702.5,234.8 L702.0,234.8 L702.0,237.8 L701.5,237.8 L701.5,237.8 L701.0,237.8 L701.0,234.8 L700.5,234.8 L700.5,234.8 L700.0,234.8 L700.0,234.8 L699.5,234.8 L699.5,234.8 L699.0,234.8 L699.0,239.0 L698.5,239.0 L698.5,239.2 L698.0,239.2 L698.0,234.8 L697.5,234.8 L697.5,234.8 L697.0,234.8 L697.0,234.8 L696.5,234.8 L696.5,234.8 L696.0,234.8 L696.0,238.2 L695.5,238.2 L695.5,237.9 L695.0,237.9 L695.0,234.8 L694.5,234.8 L694.5,234.8 L694.0,234.8 L694.0,234.8 L693.5,234.8 L693.5,234.8 L693.0,234.8 L693.0,239.9 L692.5,239.9 L692.5,239.5 L692.0,239.5 L692.0,234.8 L691.5,234.8 L691.5,234.8 L691.0,234.8 L691.0,234.8 L690.5,234.8 L690.5,234.8 L690.0,234.8 L690.0,237.4 L689.5,237.4 L689.5,237.6 L689.0,237.6 L689.0,234.8 L688.5,234.8 L688.5,234.8 L688.0,234.8 L688.0,234.8 L687.5,234.8 L687.5,234.8 L687.0,234.8 L687.0,239.1 L686.5,239.1 L686.5,239.5 L686.0,239.5 L686.0,234.8 L685.5,234.8 L685.5,234.8 L685.0,234.8 L685.0,234.8 L684.5,234.8 L684.5,234.8 L684.0,234.8 L684.0,237.7 L683.5,237.7 L683.5,237.8 L683.0,237.8 L683.0,234.8 L682.5,234.8 L682.5,234.8 L682.0,234.8 L682.0,234.8 L681.5,234.8 L681.5,234.8 L681.0,234.8 L681.0,239.2 L680.5,239.2 L680.5,240.0 L680.0,240.0 L680.0,234.8 L679.5,234.8 L679.5,234.8 L679.0,234.8 L679.0,234.8 L678.5,234.8 L678.5,234.8 L678.0,234.8 L678.0,237.3 L677.5,237.3 L677.5,237.4 L677.0,237.4 L677.0,234.8 L676.5,234.8 L676.5,234.8 L676.0,234.8 L676.0,234.8 L675.5,234.8 L675.5,234.8 L675.0,234.8 L675.0,239.3 L674.5,239.3 L674.5,239.4 L674.0,239.4 L674.0,234.8 L673.5,234.8 L673.5,234.8 L673.0,234.8 L673.0,234.8 L672.5,234.8 L672.5,234.8 L672.0,234.8 L672.0,237.6 L671.5,237.6 L671.5,237.4 L671.0,237.4 L671.0,234.8 L670.5,234.8 L670.5,234.8 L670.0,234.8 L670.0,234.8 L669.5,234.8 L669.5,234.8 L669.0,234.8 L669.0,239.4 L668.5,239.4 L668.5,239.1 L668.0,239.1 L668.0,234.8 L667.5,234.8 L667.5,234.8 L667.0,234.8 L667.0,234.8 L666.5,234.8 L666.5,234.8 L666.0,234.8 L666.0,237.5 L665.5,237.5 L665.5,237.4 L665.0,237.4 L665.0,234.8 L664.5,234.8 L664.5,234.8 L664.0,234.8 L664.0,234.8 L663.5,234.8 L663.5,234.8 L663.0,234.8 L663.0,239.9 L662.5,239.9 L662.5,239.5 L662.0,239.5 L662.0,234.8 L661.5,234.8 L661.5,234.8 L661.0,234.8 L661.0,234.8 L660.5,234.8 L660.5,234.8 L660.0,234.8 L660.0,238.2 L659.5,238.2 L659.5,237.4 L659.0,237.4 L659.0,234.8 L658.5,234.8 L658.5,234.8 L658.0,234.8 L658.0,234.8 L657.5,234.8 L657.5,234.8 L657.0,234.8 L657.0,239.1 L656.5,239.1 L656.5,239.4 L656.0,239.4 L656.0,234.8 L655.5,234.8 L655.5,234.8 L655.0,234.8 L655.0,234.8 L654.5,234.8 L654.5,234.8 L654.0,234.8 L654.0,237.8 L653.5,237.8 L653.5,238.3 L653.0,238.3 L653.0,234.8 L652.5,234.8 L652.5,234.8 L652.0,234.8 L652.0,234.8 L651.5,234.8 L651.5,234.8 L651.0,234.8 L651.0,239.5 L650.5,239.5 L650.5,239.0 L650.0,239.0 L650.0,234.8 L649.5,234.8 L649.5,234.8 L649.0,234.8 L649.0,234.8 L648.5,234.8 L648.5,234.8 L648.0,234.8 L648.0,237.7 L647.5,237.7 L647.5,238.1 L647.0,238.1 L647.0,234.8 L646.5,234.8 L646.5,234.8 L646.0,234.8 L646.0,234.8 L645.5,234.8 L645.5,234.8 L645.0,234.8 L645.0,239.1 L644.5,239.1 L644.5,239.0 L644.0,239.0 L644.0,234.8 L643.5,234.8 L643.5,234.8 L643.0,234.8 L643.0,234.8 L642.5,234.8 L642.5,234.8 L642.0,234.8 L642.0,238.3 L641.5,238.3 L641.5,237.7 L641.0,237.7 L641.0,234.8 L640.5,234.8 L640.5,234.8 L640.0,234.8 L640.0,234.8 L639.5,234.8 L639.5,234.8 L639.0,234.8 L639.0,239.6 L638.5,239.6 L638.5,239.9 L638.0,239.9 L638.0,234.8 L637.5,234.8 L637.5,234.8 L637.0,234.8 L637.0,234.8 L636.5,234.8 L636.5,234.8 L636.0,234.8 L636.0,238.0 L635.5,238.0 L635.5,237.5 L635.0,237.5 L635.0,234.8 L634.5,234.8 L634.5,234.8 L634.0,234.8 L634.0,234.8 L633.5,234.8 L633.5,234.8 L633.0,234.8 L633.0,239.2 L632.5,239.2 L632.5,239.7 L632.0,239.7 L632.0,234.8 L631.5,234.8 L631.5,234.8 L631.0,234.8 L631.0,234.8 L630.5,234.8 L630.5,234.8 L630.0,234.8 L630.0,238.0 L629.5,238.0 L629.5,237.6 L629.0,237.6 L629.0,234.8 L628.5,234.8 L628.5,234.8 L628.0,234.8 L628.0,234.8 L627.5,234.8 L627.5,234.8 L627.0,234.8 L627.0,239.5 L626.5,239.5 L626.5,239.3 L626.0,239.3 L626.0,234.8 L625.5,234.8 L625.5,234.8 L625.0,234.8 L625.0,234.8 L624.5,234.8 L624.5,234.8 L624.0,234.8 L624.0,237.7 L623.5,237.7 L623.5,238.3 L623.0,238.3 L623.0,234.8 L622.5,234.8 L622.5,234.8 L622.0,234.8 L622.0,234.8 L621.5,234.8 L621.5,234.8 L621.0,234.8 L621.0,239.4 L620.5,239.4 L620.5,239.1 L620.0,239.1 L620.0,234.8 L619.5,234.8 L619.5,234.8 L619.0,234.8 L619.0,234.8 L618.5,234.8 L618.5,234.8 L618.0,234.8 L618.0,237.5 L617.5,237.5 L617.5,237.3 L617.0,237.3 L617.0,234.8 L616.5,234.8 L616.5,234.8 L616.0,234.8 L616.0,234.8 L615.5,234.8 L615.5,234.8 L615.0,234.8 L615.0,239.2 L614.5,239.2 L614.5,239.2 L614.0,239.2 L614.0,234.8 L613.5,234.8 L613.5,234.8 L613.0,234.8 L613.0,234.8 L612.5,234.8 L612.5,234.8 L612.0,234.8 L612.0,238.0 L611.5,238.0 L611.5,238.0 L611.0,238.0 L611.0,234.8 L610.5,234.8 L610.5,234.8 L610.0,234.8 L610.0,234.8 L609.5,234.8 L609.5,234.8 L609.0,234.8 L609.0,239.3 L608.5,239.3 L608.5,239.7 L608.0,239.7 L608.0,234.8 L607.5,234.8 L607.5,234.8 L607.0,234.8 L607.0,234.8 L606.5,234.8 L606.5,234.8 L606.0,234.8 L606.0,237.4 L605.5,237.4 L605.5,238.2 L605.0,238.2 L605.0,234.8 L604.5,234.8 L604.5,234.8 L604.0,234.8 L604.0,234.8 L603.5,234.8 L603.5,234.8 L603.0,234.8 L603.0,239.5 L602.5,239.5 L602.5,239.7 L602.0,239.7 L602.0,234.8 L601.5,234.8 L601.5,234.8 L601.0,234.8 L601.0,234.8 L600.5,234.8 L600.5,234.8 L600.0,234.8 L600.0,238.0 L599.5,238.0 L599.5,238.2 L599.0,238.2 L599.0,234.8 L598.5,234.8 L598.5,234.8 L598.0,234.8 L598.0,234.8 L597.5,234.8 L597.5,234.8 L597.0,234.8 L597.0,239.4 L596.5,239.4 L596.5,239.9 L596.0,239.9 L596.0,234.8 L595.5,234.8 L595.5,234.8 L595.0,234.8 L595.0,234.8 L594.5,234.8 L594.5,234.8 L594.0,234.8 L594.0,237.3 L593.5,237.3 L593.5,237.8 L593.0,237.8 L593.0,234.8 L592.5,234.8 L592.5,234.8 L592.0,234.8 L592.0,234.8 L591.5,234.8 L591.5,234.8 L591.0,234.8 L591.0,239.2 L590.5,239.2 L590.5,239.3 L590.0,239.3 L590.0,234.8 L589.5,234.8 L589.5,234.8 L589.0,234.8 L589.0,234.8 L588.5,234.8 L588.5,234.8 L588.0,234.8 L588.0,237.5 L587.5,237.5 L587.5,237.6 L587.0,237.6 L587.0,234.8 L586.5,234.8 L586.5,234.8 L586.0,234.8 L586.0,234.8 L585.5,234.8 L585.5,234.8 L585.0,234.8 L585.0,239.3 L584.5,239.3 L584.5,239.2 L584.0,239.2 L584.0,234.8 L583.5,234.8 L583.5,234.8 L583.0,234.8 L583.0,234.8 L582.5,234.8 L582.5,234.8 L582.0,234.8 L582.0,238.2 L581.5,238.2 L581.5,237.7 L581.0,237.7 L581.0,234.8 L580.5,234.8 L580.5,234.8 L580.0,234.8 L580.0,234.8 L579.5,234.8 L579.5,234.8 L579.0,234.8 L579.0,239.4 L578.5,239.4 L578.5,239.2 L578.0,239.2 L578.0,234.8 L577.5,234.8 L577.5,234.8 L577.0,234.8 L577.0,234.8 L576.5,234.8 L576.5,234.8 L576.0,234.8 L576.0,237.5 L575.5,237.5 L575.5,237.4 L575.0,237.4 L575.0,234.8 L574.5,234.8 L574.5,234.8 L574.0,234.8 L574.0,234.8 L573.5,234.8 L573.5,234.8 L573.0,234.8 L573.0,239.5 L572.5,239.5 L572.5,239.4 L572.0,239.4 L572.0,234.8 L571.5,234.8 L571.5,234.8 L571.0,234.8 L571.0,234.8 L570.5,234.8 L570.5,234.8 L570.0,234.8 L570.0,237.9 L569.5,237.9 L569.5,238.2 L569.0,238.2 L569.0,234.8 L568.5,234.8 L568.5,234.8 L568.0,234.8 L568.0,234.8 L567.5,234.8 L567.5,234.8 L567.0,234.8 L567.0,239.5 L566.5,239.5 L566.5,239.0 L566.0,239.0 L566.0,234.8 L565.5,234.8 L565.5,234.8 L565.0,234.8 L565.0,234.8 L564.5,234.8 L564.5,234.8 L564.0,234.8 L564.0,238.1 L563.5,238.1 L563.5,237.8 L563.0,237.8 L563.0,234.8 L562.5,234.8 L562.5,234.8 L562.0,234.8 L562.0,234.8 L561.5,234.8 L561.5,234.8 L561.0,234.8 L561.0,239.9 L560.5,239.9 L560.5,239.0 L560.0,239.0 L560.0,234.8 L559.5,234.8 L559.5,234.8 L559.0,234.8 L559.0,234.8 L558.5,234.8 L558.5,234.8 L558.0,234.8 L558.0,237.5 L557.5,237.5 L557.5,237.3 L557.0,237.3 L557.0,234.8 L556.5,234.8 L556.5,234.8 L556.0,234.8 L556.0,234.8 L555.5,234.8 L555.5,234.8 L555.0,234.8 L555.0,239.1 L554.5,239.1 L554.5,239.4 L554.0,239.4 L554.0,234.8 L553.5,234.8 L553.5,234.8 L553.0,234.8 L553.0,234.8 L552.5,234.8 L552.5,234.8 L552.0,234.8 L552.0,238.0 L551.5,238.0 L551.5,237.9 L551.0,237.9 L551.0,234.8 L550.5,234.8 L550.5,234.8 L550.0,234.8 L550.0,234.8 L549.5,234.8 L549.5,234.8 L549.0,234.8 L549.0,239.6 L548.5,239.6 L548.5,239.5 L548.0,239.5 L548.0,234.8 L547.5,234.8 L547.5,234.8 L547.0,234.8 L547.0,234.8 L546.5,234.8 L546.5,234.8 L546.0,234.8 L546.0,238.2 L545.5,238.2 L545.5,237.7 L545.0,237.7 L545.0,234.8 L544.5,234.8 L544.5,234.8 L544.0,234.8 L544.0,234.8 L543.5,234.8 L543.5,234.8 L543.0,234.8 L543.0,239.8 L542.5,239.8 L542.5,239.6 L542.0,239.6 L542.0,234.8 L541.5,234.8 L541.5,234.8 L541.0,234.8 L541.0,234.8 L540.5,234.8 L540.5,234.8 L540.0,234.8 L540.0,238.1 L539.5,238.1 L539.5,237.4 L539.0,237.4 L539.0,234.8 L538.5,234.8 L538.5,234.8 L538.0,234.8 L538.0,234.8 L537.5,234.8 L537.5,234.8 L537.0,234.8 L537.0,239.4 L536.5,239.4 L536.5,239.3 L536.0,239.3 L536.0,234.8 L535.5,234.8 L535.5,234.8 L535.0,234.8 L535.0,234.8 L534.5,234.8 L534.5,234.8 L534.0,234.8 L534.0,237.9 L533.5,237.9 L533.5,237.6 L533.0,237.6 L533.0,234.8 L532.5,234.8 L532.5,234.8 L532.0,234.8 L532.0,234.8 L531.5,234.8 L531.5,234.8 L531.0,234.8 L531.0,239.2 L530.5,239.2 L530.5,239.4 L530.0,239.4 L530.0,234.8 L529.5,234.8 L529.5,234.8 L529.0,234.8 L529.0,234.8 L528.5,234.8 L528.5,234.8 L528.0,234.8 L528.0,237.9 L527.5,237.9 L527.5,237.4 L527.0,237.4 L527.0,234.8 L526.5,234.8 L526.5,234.8 L526.0,234.8 L526.0,234.8 L525.5,234.8 L525.5,234.8 L525.0,234.8 L525.0,239.8 L524.5,239.8 L524.5,239.7 L524.0,239.7 L524.0,234.8 L523.5,234.8 L523.5,234.8 L523.0,234.8 L523.0,234.8 L522.5,234.8 L522.5,234.8 L522.0,234.8 L522.0,238.3 L521.5,238.3 L521.5,237.4 L521.0,237.4 L521.0,234.8 L520.5,234.8 L520.5,234.8 L520.0,234.8 L520.0,234.8 L519.5,234.8 L519.5,234.8 L519.0,234.8 L519.0,239.2 L518.5,239.2 L518.5,239.7 L518.0,239.7 L518.0,234.8 L517.5,234.8 L517.5,234.8 L517.0,234.8 L517.0,234.8 L516.5,234.8 L516.5,234.8 L516.0,234.8 L516.0,238.3 L515.5,238.3 L515.5,237.5 L515.0,237.5 L515.0,234.8 L514.5,234.8 L514.5,234.8 L514.0,234.8 L514.0,234.8 L513.5,234.8 L513.5,234.8 L513.0,234.8 L513.0,239.1 L512.5,239.1 L512.5,239.7 L512.0,239.7 L512.0,234.8 L511.5,234.8 L511.5,234.8 L511.0,234.8 L511.0,234.8 L510.5,234.8 L510.5,234.8 L510.0,234.8 L510.0,237.3 L509.5,237.3 L509.5,238.1 L509.0,238.1 L509.0,234.8 L508.5,234.8 L508.5,234.8 L508.0,234.8 L508.0,234.8 L507.5,234.8 L507.5,234.8 L507.0,234.8 L507.0,239.3 L506.5,239.3 L506.5,239.5 L506.0,239.5 L506.0,234.8 L505.5,234.8 L505.5,234.8 L505.0,234.8 L505.0,234.8 L504.5,234.8 L504.5,234.8 L504.0,234.8 L504.0,238.2 L503.5,238.2 L503.5,237.5 L503.0,237.5 L503.0,234.8 L502.5,234.8 L502.5,234.8 L502.0,234.8 L502.0,234.8 L501.5,234.8 L501.5,234.8 L501.0,234.8 L501.0,239.6 L500.5,239.6 L500.5,239.1 L500.0,239.1 L500.0,234.8 L499.5,234.8 L499.5,234.8 L499.0,234.8 L499.0,234.8 L498.5,234.8 L498.5,234.8 L498.0,234.8 L498.0,237.4 L497.5,237.4 L497.5,238.0 L497.0,238.0 L497.0,234.8 L496.5,234.8 L496.5,234.8 L496.0,234.8 L496.0,234.8 L495.5,234.8 L495.5,234.8 L495.0,234.8 L495.0,239.1 L494.5,239.1 L494.5,239.7 L494.0,239.7 L494.0,234.8 L493.5,234.8 L493.5,234.8 L493.0,234.8 L493.0,234.8 L492.5,234.8 L492.5,234.8 L492.0,234.8 L492.0,238.0 L491.5,238.0 L491.5,237.5 L491.0,237.5 L491.0,234.8 L490.5,234.8 L490.5,234.8 L490.0,234.8 L490.0,234.8 L489.5,234.8 L489.5,234.8 L489.0,234.8 L489.0,239.7 L488.5,239.7 L488.5,239.4 L488.0,239.4 L488.0,234.8 L487.5,234.8 L487.5,234.8 L487.0,234.8 L487.0,234.8 L486.5,234.8 L486.5,234.8 L486.0,234.8 L486.0,237.5 L485.5,237.5 L485.5,237.4 L485.0,237.4 L485.0,234.8 L484.5,234.8 L484.5,234.8 L484.0,234.8 L484.0,234.8 L483.5,234.8 L483.5,234.8 L483.0,234.8 L483.0,239.5 L482.5,239.5 L482.5,239.8 L482.0,239.8 L482.0,234.8 L481.5,234.8 L481.5,234.8 L481.0,234.8 L481.0,234.8 L480.5,234.8 L480.5,234.8 L480.0,234.8 L480.0,237.6 L479.5,237.6 L479.5,237.9 L479.0,237.9 L479.0,234.8 L478.5,234.8 L478.5,234.8 L478.0,234.8 L478.0,234.8 L477.5,234.8 L477.5,234.8 L477.0,234.8 L477.0,239.3 L476.5,239.3 L476.5,239.6 L476.0,239.6 L476.0,234.8 L475.5,234.8 L475.5,234.8 L475.0,234.8 L475.0,234.8 L474.5,234.8 L474.5,234.8 L474.0,234.8 L474.0,237.9 L473.5,237.9 L473.5,238.2 L473.0,238.2 L473.0,234.8 L472.5,234.8 L472.5,234.8 L472.0,234.8 L472.0,234.8 L471.5,234.8 L471.5,234.8 L471.0,234.8 L471.0,239.5 L470.5,239.5 L470.5,239.6 L470.0,239.6 L470.0,234.8 L469.5,234.8 L469.5,234.8 L469.0,234.8 L469.0,234.8 L468.5,234.8 L468.5,234.8 L468.0,234.8 L468.0,237.5 L467.5,237.5 L467.5,238.0 L467.0,238.0 L467.0,234.8 L466.5,234.8 L466.5,234.8 L466.0,234.8 L466.0,234.8 L465.5,234.8 L465.5,234.8 L465.0,234.8 L465.0,239.1 L464.5,239.1 L464.5,239.4 L464.0,239.4 L464.0,234.8 L463.5,234.8 L463.5,234.8 L463.0,234.8 L463.0,234.8 L462.5,234.8 L462.5,234.8 L462.0,234.8 L462.0,238.2 L461.5,238.2 L461.5,237.8 L461.0,237.8 L461.0,234.8 L460.5,234.8 L460.5,234.8 L460.0,234.8 L460.0,234.8 L459.5,234.8 L459.5,234.8 L459.0,234.8 L459.0,239.6 L458.5,239.6 L458.5,239.3 L458.0,239.3 L458.0,234.8 L457.5,234.8 L457.5,234.8 L457.0,234.8 L457.0,234.8 L456.5,234.8 L456.5,234.8 L456.0,234.8 L456.0,237.7 L455.5,237.7 L455.5,237.4 L455.0,237.4 L455.0,234.8 L454.5,234.8 L454.5,234.8 L454.0,234.8 L454.0,234.8 L453.5,234.8 L453.5,234.8 L453.0,234.8 L453.0,239.9 L452.5,239.9 L452.5,239.7 L452.0,239.7 L452.0,234.8 L451.5,234.8 L451.5,234.8 L451.0,234.8 L451.0,234.8 L450.5,234.8 L450.5,234.8 L450.0,234.8 L450.0,237.9 L449.5,237.9 L449.5,237.4 L449.0,237.4 L449.0,234.8 L448.5,234.8 L448.5,234.8 L448.0,234.8 L448.0,234.8 L447.5,234.8 L447.5,234.8 L447.0,234.8 L447.0,239.1 L446.5,239.1 L446.5,239.4 L446.0,239.4 L446.0,234.8 L445.5,234.8 L445.5,234.8 L445.0,234.8 L445.0,234.8 L444.5,234.8 L444.5,234.8 L444.0,234.8 L444.0,237.4 L443.5,237.4 L443.5,237.3 L443.0,237.3 L443.0,234.8 L442.5,234.8 L442.5,234.8 L442.0,234.8 L442.0,234.8 L441.5,234.8 L441.5,234.8 L441.0,234.8 L441.0,239.6 L440.5,239.6 L440.5,239.2 L440.0,239.2 L440.0,234.8 L439.5,234.8 L439.5,234.8 L439.0,234.8 L439.0,234.8 L438.5,234.8 L438.5,234.8 L438.0,234.8 L438.0,237.7 L437.5,237.7 L437.5,237.9 L437.0,237.9 L437.0,234.8 L436.5,234.8 L436.5,234.8 L436.0,234.8 L436.0,234.8 L435.5,234.8 L435.5,234.8 L435.0,234.8 L435.0,239.1 L434.5,239.1 L434.5,239.9 L434.0,239.9 L434.0,234.8 L433.5,234.8 L433.5,234.8 L433.0,234.8 L433.0,234.8 L432.5,234.8 L432.5,234.8 L432.0,234.8 L432.0,237.6 L431.5,237.6 L431.5,237.4 L431.0,237.4 L431.0,234.8 L430.5,234.8 L430.5,234.8 L430.0,234.8 L430.0,234.8 L429.5,234.8 L429.5,234.8 L429.0,234.8 L429.0,239.7 L428.5,239.7 L428.5,240.0 L428.0,240.0 L428.0,234.8 L427.5,234.8 L427.5,234.8 L427.0,234.8 L427.0,234.8 L426.5,234.8 L426.5,234.8 L426.0,234.8 L426.0,237.9 L425.5,237.9 L425.5,237.5 L425.0,237.5 L425.0,234.8 L424.5,234.8 L424.5,234.8 L424.0,234.8 L424.0,234.8 L423.5,234.8 L423.5,234.8 L423.0,234.8 L423.0,239.8 L422.5,239.8 L422.5,239.0 L422.0,239.0 L422.0,234.8 L421.5,234.8 L421.5,234.8 L421.0,234.8 L421.0,234.8 L420.5,234.8 L420.5,234.8 L420.0,234.8 L420.0,238.0 L419.5,238.0 L419.5,238.3 L419.0,238.3 L419.0,234.8 L418.5,234.8 L418.5,234.8 L418.0,234.8 L418.0,234.8 L417.5,234.8 L417.5,234.8 L417.0,234.8 L417.0,240.0 L416.5,240.0 L416.5,239.7 L416.0,239.7 L416.0,234.8 L415.5,234.8 L415.5,234.8 L415.0,234.8 L415.0,234.8 L414.5,234.8 L414.5,234.8 L414.0,234.8 L414.0,237.3 L413.5,237.3 L413.5,238.0 L413.0,238.0 L413.0,234.8 L412.5,234.8 L412.5,234.8 L412.0,234.8 L412.0,234.8 L411.5,234.8 L411.5,234.8 L411.0,234.8 L411.0,239.8 L410.5,239.8 L410.5,239.8 L410.0,239.8 L410.0,234.8 L409.5,234.8 L409.5,234.8 L409.0,234.8 L409.0,234.8 L408.5,234.8 L408.5,234.8 L408.0,234.8 L408.0,237.5 L407.5,237.5 L407.5,237.4 L407.0,237.4 L407.0,234.8 L406.5,234.8 L406.5,234.8 L406.0,234.8 L406.0,234.8 L405.5,234.8 L405.5,234.8 L405.0,234.8 L405.0,239.8 L404.5,239.8 L404.5,239.6 L404.0,239.6 L404.0,234.8 L403.5,234.8 L403.5,234.8 L403.0,234.8 L403.0,234.8 L402.5,234.8 L402.5,234.8 L402.0,234.8 L402.0,237.5 L401.5,237.5 L401.5,237.6 L401.0,237.6 L401.0,234.8 L400.5,234.8 L400.5,234.8 L400.0,234.8 L400.0,234.8 L399.5,234.8 L399.5,234.8 L399.0,234.8 L399.0,239.5 L398.5,239.5 L398.5,239.5 L398.0,239.5 L398.0,234.8 L397.5,234.8 L397.5,234.8 L397.0,234.8 L397.0,234.8 L396.5,234.8 L396.5,234.8 L396.0,234.8 L396.0,237.8 L395.5,237.8 L395.5,237.4 L395.0,237.4 L395.0,234.8 L394.5,234.8 L394.5,234.8 L394.0,234.8 L394.0,234.8 L393.5,234.8 L393.5,234.8 L393.0,234.8 L393.0,239.9 L392.5,239.9 L392.5,239.8 L392.0,239.8 L392.0,234.8 L391.5,234.8 L391.5,234.8 L391.0,234.8 Z" fill="#b2ffff"/>
    <rect x="401" y="114" width="30" height="190" fill="#000" fill-opacity="0.055"/>
    <g fill="none" stroke="#fff" stroke-opacity="0.14" stroke-width="1">
      <rect x="405.5" y="114.5" width="22" height="21" rx="3"/><path d="M410,126 L413,130 L420,118"/>
      <rect x="405.5" y="147.5" width="22" height="21" rx="3"/><path d="M410,151 V165 H423 M411,156 L414,152 L417,155 L420,152 L423,156"/>
      <rect x="405.5" y="180.5" width="22" height="21" rx="3"/><path d="M416.5,184 V198 M409.5,191 H423.5" stroke-width="1.5"/>
      <rect x="405.5" y="212.5" width="22" height="21" rx="3"/><path d="M409.5,223 H423.5" stroke-width="1.5"/>
      <rect x="405.5" y="245.5" width="22" height="21" rx="3"/><path d="M416.5,249 V263 M409,252 L414,256 L409,260 Z M424,252 L419,256 L424,260 Z"/>
      <rect x="405.5" y="278.5" width="22" height="21" rx="3"/><path d="M410,283 H423 M410,295 H423 M416.5,283 V295"/>
    </g>
    <circle cx="552.9" cy="373.1" r="2.7" fill="none" stroke="#d0d0d0" stroke-width="1.2"/>

    <g stroke="#585858" stroke-width="1">
      <path d="M376,436.5 H770 M376,467.5 H770 M376,498.5 H770 M376,530.5 H770"/>
      <path d="M441.5,405 V561 M507.5,405 V561 M573.5,405 V561 M639.5,405 V561 M705.5,405 V561"/>
    </g>
    <path d="M376,561 L376.00,518.7 L376.50,519.4 L377.00,521.4 L377.50,519.0 L378.00,519.3 L378.50,519.8 L379.00,517.6 L379.50,519.5 L380.00,520.2 L380.50,521.1 L381.00,517.3 L381.50,518.5 L382.00,517.4 L382.50,521.4 L383.00,520.8 L383.50,517.3 L384.00,522.5 L384.50,522.5 L385.00,520.8 L385.50,520.7 L386.00,518.2 L386.50,517.5 L387.00,520.4 L387.50,517.8 L388.00,518.6 L388.50,518.9 L389.00,517.8 L389.50,520.3 L390.00,520.2 L390.35,520.6 L390.65,479.0 L391.55,479.0 L391.85,520.6 L392.00,520.7 L392.50,521.6 L393.00,520.6 L393.50,519.6 L394.00,523.6 L394.50,523.7 L395.00,522.9 L395.50,521.9 L396.00,519.6 L396.50,518.9 L397.00,519.0 L397.50,517.6 L398.00,521.3 L398.50,519.1 L398.55,519.3 L398.85,493.0 L399.75,493.0 L400.05,519.3 L400.50,520.7 L401.00,515.9 L401.05,518.3 L401.35,500.0 L402.25,500.0 L402.55,518.3 L403.00,520.4 L403.50,517.0 L404.00,515.1 L404.50,517.9 L405.00,518.5 L405.50,515.4 L406.00,514.1 L406.45,515.7 L406.75,485.0 L407.65,485.0 L407.95,515.7 L408.00,513.1 L408.50,513.5 L409.00,512.4 L409.50,511.9 L410.00,515.6 L410.50,511.7 L411.00,513.3 L411.50,512.2 L412.00,510.3 L412.50,512.8 L413.00,509.0 L413.50,511.3 L414.00,507.9 L414.50,508.4 L415.00,506.2 L415.50,505.4 L416.00,508.1 L416.50,506.0 L417.00,502.2 L417.50,504.2 L418.00,499.4 L418.50,498.4 L419.00,498.9 L419.50,495.8 L420.00,492.3 L420.50,490.9 L421.00,487.0 L421.50,484.0 L422.00,474.5 L422.50,465.0 L423.00,443.3 L423.10,439.0 L423.50,439.0 L423.70,439.0 L424.00,447.6 L424.50,462.0 L425.00,473.0 L425.50,483.5 L426.00,487.2 L426.50,491.8 L427.00,494.7 L427.50,496.6 L428.00,498.2 L428.50,500.3 L429.00,503.1 L429.50,504.5 L430.00,507.2 L430.50,507.5 L431.00,508.4 L431.50,510.1 L432.00,510.0 L432.50,510.9 L433.00,512.2 L433.50,511.5 L434.00,512.0 L434.50,514.0 L435.00,514.4 L435.50,514.0 L436.00,514.4 L436.50,515.9 L437.00,516.7 L437.50,515.8 L438.00,517.6 L438.50,517.9 L439.00,517.8 L439.50,517.9 L440.00,517.8 L440.50,517.9 L441.00,519.7 L441.50,518.6 L442.00,519.7 L442.50,519.1 L443.00,520.3 L443.50,520.1 L444.00,519.7 L444.50,519.7 L445.00,520.9 L445.50,519.8 L446.00,520.2 L446.25,520.9 L446.55,515.0 L447.45,515.0 L447.75,520.9 L448.00,520.7 L448.50,522.0 L449.00,520.8 L449.50,520.6 L450.00,521.2 L450.50,521.6 L451.00,521.0 L451.50,521.3 L452.00,521.8 L452.50,522.3 L453.00,521.7 L453.50,522.3 L454.00,523.4 L454.05,522.9 L454.35,509.0 L455.25,509.0 L455.55,522.9 L456.00,523.5 L456.50,522.9 L457.00,522.8 L457.50,523.0 L458.00,524.7 L458.50,524.2 L459.00,524.6 L459.50,522.8 L460.00,523.7 L460.50,523.3 L461.00,523.7 L461.50,522.8 L462.00,523.9 L462.50,521.8 L463.00,522.2 L463.50,522.1 L464.00,522.0 L464.50,521.2 L465.00,520.7 L465.50,520.5 L466.00,520.2 L466.50,517.9 L467.00,517.1 L467.50,516.1 L468.00,514.7 L468.50,509.2 L469.00,504.7 L469.50,500.0 L470.00,491.8 L470.50,483.6 L470.60,482.0 L471.00,470.4 L471.10,467.5 L471.50,467.5 L471.60,467.5 L472.00,479.2 L472.30,488.0 L472.50,494.3 L473.00,510.0 L473.50,515.0 L474.00,519.7 L474.50,523.6 L475.00,528.2 L475.50,530.3 L476.00,533.1 L476.50,535.7 L477.00,532.4 L477.50,539.7 L478.00,544.7 L478.50,544.0 L479.00,542.8 L479.50,539.4 L480.00,544.2 L480.50,542.4 L481.00,540.7 L481.50,545.5 L482.00,536.5 L482.50,544.5 L483.00,535.9 L483.50,542.8 L484.00,541.4 L484.50,538.4 L485.00,544.0 L485.50,541.6 L486.00,543.1 L486.05,542.3 L486.35,526.0 L487.25,526.0 L487.55,542.3 L488.00,539.4 L488.50,544.0 L489.00,538.3 L489.50,537.9 L490.00,546.8 L490.05,542.5 L490.35,534.0 L491.25,534.0 L491.55,542.5 L492.00,539.9 L492.50,544.0 L493.00,538.4 L493.50,541.2 L494.00,545.8 L494.50,547.1 L495.00,546.7 L495.50,540.8 L496.00,543.2 L496.50,540.0 L497.00,537.9 L497.50,542.2 L498.00,546.3 L498.50,546.5 L499.00,544.9 L499.25,543.0 L499.55,537.0 L500.45,537.0 L500.75,543.0 L501.00,541.8 L501.50,539.7 L502.00,539.0 L502.50,541.4 L503.00,543.9 L503.50,542.3 L504.00,540.2 L504.50,546.5 L505.00,548.2 L505.50,541.9 L506.00,537.3 L506.50,536.8 L507.00,546.9 L507.50,536.9 L508.00,544.9 L508.50,543.3 L509.00,540.2 L509.50,545.9 L510.00,536.7 L510.50,538.1 L511.00,541.9 L511.50,536.8 L512.00,546.4 L512.50,539.3 L513.00,538.2 L513.50,537.0 L514.00,544.0 L514.50,541.8 L515.00,544.0 L515.50,544.3 L516.00,546.2 L516.50,548.0 L517.00,544.7 L517.50,538.9 L517.65,543.1 L517.95,500.5 L518.85,500.5 L519.15,543.1 L519.50,542.2 L520.00,545.1 L520.50,538.7 L521.00,539.8 L521.50,540.7 L522.00,544.9 L522.50,542.8 L523.00,543.9 L523.50,545.6 L524.00,541.2 L524.50,546.0 L525.00,547.4 L525.50,537.6 L526.00,547.7 L526.50,545.2 L527.00,538.1 L527.50,542.0 L528.00,544.0 L528.50,547.5 L529.00,541.1 L529.50,543.4 L530.00,547.1 L530.50,546.1 L531.00,547.9 L531.50,542.1 L532.00,544.4 L532.50,539.0 L533.00,545.2 L533.50,546.4 L534.00,544.3 L534.50,545.2 L535.00,539.1 L535.50,547.4 L536.00,548.3 L536.50,548.3 L537.00,543.0 L537.50,546.1 L538.00,540.4 L538.50,547.5 L539.00,546.9 L539.50,540.8 L540.00,537.6 L540.50,541.9 L541.00,543.2 L541.50,545.8 L542.00,542.5 L542.50,537.0 L543.00,546.3 L543.50,537.4 L544.00,546.2 L544.25,543.2 L544.55,536.0 L545.45,536.0 L545.75,543.2 L546.00,538.3 L546.50,538.4 L547.00,542.8 L547.50,545.3 L548.00,546.7 L548.50,544.9 L549.00,548.0 L549.50,542.6 L550.00,548.0 L550.50,537.7 L551.00,539.3 L551.50,543.0 L552.00,540.1 L552.50,545.4 L553.00,544.3 L553.50,542.9 L554.00,546.8 L554.50,543.4 L555.00,540.4 L555.50,541.3 L556.00,546.8 L556.50,547.5 L557.00,539.2 L557.50,546.9 L558.00,548.3 L558.50,543.0 L559.00,543.6 L559.25,543.3 L559.55,537.0 L560.45,537.0 L560.75,543.3 L561.00,544.0 L561.50,537.0 L562.00,548.3 L562.50,542.9 L563.00,541.5 L563.50,546.3 L564.00,543.5 L564.50,542.6 L565.00,545.0 L565.50,537.5 L566.00,543.2 L566.50,541.7 L567.00,548.2 L567.50,547.8 L568.00,540.0 L568.50,542.4 L569.00,538.3 L569.50,542.0 L570.00,546.5 L570.50,547.6 L571.00,542.5 L571.50,540.6 L572.00,539.1 L572.50,544.2 L573.00,547.9 L573.50,538.3 L574.00,546.1 L574.50,537.0 L575.00,539.1 L575.50,539.5 L576.00,545.0 L576.50,540.6 L577.00,541.0 L577.50,544.2 L578.00,538.0 L578.50,545.6 L579.00,538.3 L579.50,542.9 L580.00,539.8 L580.50,539.2 L581.00,543.2 L581.50,542.0 L582.00,541.3 L582.50,541.8 L583.00,543.2 L583.50,538.7 L584.00,539.3 L584.50,544.4 L585.00,544.5 L585.50,543.2 L586.00,547.0 L586.50,544.2 L587.00,547.1 L587.50,539.6 L588.00,545.7 L588.50,546.6 L589.00,547.7 L589.50,540.6 L590.00,540.6 L590.50,547.9 L591.00,539.5 L591.50,548.8 L592.00,547.5 L592.05,543.5 L592.35,533.0 L593.25,533.0 L593.55,543.5 L594.00,540.0 L594.50,538.0 L595.00,546.9 L595.50,541.9 L596.00,546.4 L596.50,538.4 L597.00,541.7 L597.50,545.1 L598.00,537.1 L598.50,539.3 L599.00,545.1 L599.50,547.8 L600.00,548.5 L600.50,538.3 L601.00,543.0 L601.50,546.0 L602.00,542.9 L602.50,545.1 L603.00,539.2 L603.50,537.8 L604.00,538.2 L604.50,537.4 L605.00,543.5 L605.50,543.1 L606.00,543.8 L606.50,538.7 L607.00,539.2 L607.50,539.4 L608.00,547.0 L608.50,548.8 L609.00,548.1 L609.50,538.1 L610.00,537.7 L610.50,548.4 L611.00,542.5 L611.50,546.1 L612.00,540.9 L612.50,542.6 L613.00,543.2 L613.50,542.1 L614.00,544.2 L614.50,537.1 L615.00,545.4 L615.50,547.1 L616.00,539.2 L616.50,542.4 L617.00,545.9 L617.50,541.9 L618.00,539.3 L618.50,539.0 L619.00,543.2 L619.50,537.2 L620.00,547.7 L620.50,546.6 L621.00,545.5 L621.50,547.4 L622.00,544.6 L622.50,541.9 L623.00,544.2 L623.50,543.1 L624.00,548.8 L624.50,546.7 L625.00,540.1 L625.50,548.0 L626.00,546.0 L626.50,546.4 L627.00,546.8 L627.50,541.9 L628.00,547.8 L628.50,547.6 L629.00,545.4 L629.50,546.3 L630.00,546.3 L630.50,541.9 L631.00,545.8 L631.50,537.9 L632.00,541.2 L632.50,542.7 L633.00,537.2 L633.50,541.4 L634.00,544.8 L634.50,544.6 L635.00,539.9 L635.50,548.4 L636.00,545.1 L636.50,541.2 L637.00,545.0 L637.50,544.0 L638.00,543.5 L638.50,541.8 L639.00,549.1 L639.50,544.8 L640.00,545.6 L640.25,543.7 L640.55,535.0 L641.45,535.0 L641.75,543.7 L642.00,544.5 L642.50,546.0 L643.00,540.2 L643.50,542.0 L644.00,537.8 L644.50,539.5 L645.00,541.7 L645.50,538.3 L646.00,540.2 L646.50,548.0 L647.00,543.8 L647.50,543.3 L648.00,548.8 L648.50,544.0 L649.00,549.1 L649.50,544.8 L650.00,546.9 L650.50,538.1 L651.00,544.4 L651.50,546.3 L652.00,537.7 L652.50,548.4 L653.00,539.1 L653.50,542.9 L654.00,539.2 L654.50,543.2 L655.00,544.6 L655.50,537.9 L656.00,548.6 L656.50,542.3 L657.00,543.6 L657.50,544.4 L658.00,541.6 L658.50,540.7 L659.00,545.1 L659.50,544.0 L660.00,540.7 L660.50,545.9 L661.00,540.8 L661.50,537.4 L662.00,540.2 L662.50,537.8 L663.00,539.1 L663.50,546.3 L664.00,542.0 L664.50,548.0 L665.00,546.3 L665.50,537.9 L666.00,549.2 L666.50,548.6 L667.00,538.2 L667.50,548.2 L668.00,542.5 L668.50,543.0 L669.00,549.0 L669.50,540.2 L670.00,543.6 L670.50,548.6 L671.00,546.0 L671.50,542.9 L672.00,549.1 L672.50,547.1 L673.00,544.6 L673.50,538.7 L674.00,544.8 L674.50,542.8 L675.00,539.8 L675.25,543.9 L675.55,535.0 L676.45,535.0 L676.75,543.9 L677.00,542.7 L677.50,545.4 L678.00,542.8 L678.50,540.5 L679.00,544.4 L679.50,542.4 L680.00,546.7 L680.50,543.7 L681.00,549.3 L681.50,548.8 L682.00,546.2 L682.50,540.2 L683.00,538.8 L683.50,548.1 L684.00,546.8 L684.50,544.9 L685.00,541.7 L685.50,540.7 L686.00,545.6 L686.50,544.2 L687.00,544.5 L687.50,545.0 L688.00,546.5 L688.50,539.7 L689.00,540.4 L689.50,549.2 L690.00,548.4 L690.50,548.0 L691.00,537.9 L691.50,538.2 L692.00,540.7 L692.50,542.5 L693.00,544.9 L693.50,538.7 L694.00,544.0 L694.50,538.3 L695.00,538.5 L695.50,545.6 L696.00,544.1 L696.50,545.0 L697.00,541.9 L697.50,543.2 L698.00,540.0 L698.50,541.6 L699.00,546.4 L699.50,547.5 L700.00,538.4 L700.50,538.9 L701.00,547.2 L701.50,545.0 L702.00,546.7 L702.50,540.1 L703.00,542.6 L703.50,540.6 L704.00,547.2 L704.50,541.9 L705.00,545.4 L705.50,549.4 L706.00,541.4 L706.50,544.1 L707.00,546.5 L707.50,548.6 L708.00,542.7 L708.50,542.0 L709.00,538.7 L709.50,548.0 L710.00,538.5 L710.50,538.5 L711.00,544.3 L711.25,544.2 L711.55,536.0 L712.45,536.0 L712.75,544.2 L713.00,546.9 L713.50,538.5 L714.00,540.1 L714.50,545.5 L715.00,538.6 L715.50,541.2 L716.00,546.3 L716.50,545.9 L717.00,541.0 L717.50,539.3 L718.00,541.9 L718.50,546.3 L719.00,542.0 L719.50,539.0 L720.00,546.1 L720.50,544.4 L721.00,548.6 L721.50,548.9 L722.00,548.6 L722.50,542.9 L723.00,547.3 L723.50,541.3 L724.00,541.4 L724.50,542.4 L725.00,548.9 L725.50,548.4 L726.00,540.6 L726.50,542.0 L727.00,542.0 L727.50,542.0 L728.00,542.4 L728.50,542.3 L729.00,540.0 L729.50,544.4 L730.00,547.2 L730.50,544.2 L731.00,547.7 L731.50,544.4 L732.00,539.8 L732.25,544.3 L732.55,536.0 L733.45,536.0 L733.75,544.3 L734.00,538.0 L734.50,543.9 L735.00,544.2 L735.50,544.5 L736.00,549.3 L736.50,545.5 L737.00,547.4 L737.50,538.5 L738.00,544.3 L738.50,547.2 L739.00,538.7 L739.50,538.7 L740.00,546.6 L740.50,548.5 L741.00,538.7 L741.50,545.3 L742.00,539.5 L742.50,546.7 L743.00,545.5 L743.50,540.7 L744.00,540.4 L744.50,546.9 L745.00,544.0 L745.50,546.9 L746.00,542.5 L746.50,541.8 L747.00,549.4 L747.50,545.8 L748.00,543.7 L748.50,544.2 L749.00,546.4 L749.50,546.3 L750.00,548.8 L750.50,542.7 L751.00,547.7 L751.50,545.8 L752.00,548.0 L752.50,547.5 L753.00,547.8 L753.50,548.5 L754.00,549.3 L754.50,545.5 L755.00,544.1 L755.50,546.3 L756.00,547.4 L756.50,542.9 L757.00,542.9 L757.50,539.6 L758.00,546.7 L758.50,549.7 L759.00,542.3 L759.50,539.9 L760.00,540.3 L760.50,542.9 L761.00,541.4 L761.50,549.5 L762.00,538.6 L762.50,541.6 L763.00,539.2 L763.50,545.6 L764.00,547.2 L764.50,540.0 L765.00,538.6 L765.50,543.4 L766.00,544.9 L766.50,548.8 L767.00,538.3 L767.50,539.2 L768.00,540.1 L768.50,540.5 L769.00,540.7 L769.50,546.5 L770.00,545.0 L770,561 Z" fill="#b2ffff"/>
    <rect x="386" y="415" width="30" height="158" fill="#000" fill-opacity="0.055"/>
    <g fill="none" stroke="#fff" stroke-opacity="0.14" stroke-width="1">
      <rect x="390.5" y="420.5" width="23" height="21" rx="3"/><path d="M395,432 L398,437 L404,425"/>
      <rect x="390.5" y="452.5" width="23" height="21" rx="3"/><path d="M395,456 V469 H409 M395,461 L398,457 L401,460 L404,457 L408,460"/>
      <rect x="390.5" y="483.5" width="23" height="21" rx="3"/><path d="M402,487 V501 M396,494 H408" stroke-width="1.5"/>
      <rect x="390.5" y="515.5" width="23" height="21" rx="3"/><path d="M395,526 H409" stroke-width="1.5"/>
      <rect x="390.5" y="546.5" width="23" height="21" rx="3"/><path d="M402,550 V564 M395,553 L400,557 L395,561 Z M409,553 L404,557 L409,561 Z"/>
    </g>
    <g font-family="Liberation Sans" font-size="11" fill="#ececec" stroke="#ececec" stroke-width="0.25">
<text x="382.0" y="120.0" text-anchor="end" textLength="34.5" lengthAdjust="spacingAndGlyphs">339,2</text>
<text x="382.0" y="139.7" text-anchor="end" textLength="42.0" lengthAdjust="spacingAndGlyphs">305,28</text>
<text x="382.0" y="159.4" text-anchor="end" textLength="42.0" lengthAdjust="spacingAndGlyphs">271,36</text>
<text x="382.0" y="179.1" text-anchor="end" textLength="42.0" lengthAdjust="spacingAndGlyphs">237,44</text>
<text x="382.0" y="198.8" text-anchor="end" textLength="42.0" lengthAdjust="spacingAndGlyphs">203,52</text>
<text x="382.0" y="218.5" text-anchor="end" textLength="34.5" lengthAdjust="spacingAndGlyphs">169,6</text>
<text x="382.0" y="238.1" text-anchor="end" textLength="42.0" lengthAdjust="spacingAndGlyphs">135,68</text>
<text x="382.0" y="257.8" text-anchor="end" textLength="42.0" lengthAdjust="spacingAndGlyphs">101,76</text>
<text x="382.0" y="277.5" text-anchor="end" textLength="34.5" lengthAdjust="spacingAndGlyphs">67,84</text>
<text x="382.0" y="297.2" text-anchor="end" textLength="34.5" lengthAdjust="spacingAndGlyphs">33,92</text>
<text x="382.0" y="316.9" text-anchor="end" textLength="19.4" lengthAdjust="spacingAndGlyphs">0,0</text>
<text x="391.0" y="342.2" text-anchor="middle" textLength="26.9" lengthAdjust="spacingAndGlyphs">0.00</text>
<text x="467.8" y="342.2" text-anchor="middle" textLength="26.9" lengthAdjust="spacingAndGlyphs">0.20</text>
<text x="543.6" y="342.2" text-anchor="middle" textLength="26.9" lengthAdjust="spacingAndGlyphs">0.40</text>
<text x="619.4" y="342.2" text-anchor="middle" textLength="26.9" lengthAdjust="spacingAndGlyphs">0.60</text>
<text x="695.2" y="342.2" text-anchor="middle" textLength="26.9" lengthAdjust="spacingAndGlyphs">0.80</text>
<text x="771.0" y="342.2" text-anchor="middle" textLength="26.9" lengthAdjust="spacingAndGlyphs">1.00</text>
<text x="580.0" y="355.2" text-anchor="middle" textLength="58.8" lengthAdjust="spacingAndGlyphs">Время [с]</text>
<text x="545.4" y="94.8" text-anchor="middle" textLength="96.8" lengthAdjust="spacingAndGlyphs">Осциллограмма</text>
<text transform="translate(327.2,212) rotate(-90)" text-anchor="middle" textLength="108" lengthAdjust="spacingAndGlyphs">Яркость [кд/м^2]</text>
<text x="366.5" y="410.2" text-anchor="end" textLength="7.5" lengthAdjust="spacingAndGlyphs">0</text>
<text x="366.5" y="441.4" text-anchor="end" textLength="20.1" lengthAdjust="spacingAndGlyphs">-20</text>
<text x="366.5" y="472.6" text-anchor="end" textLength="20.1" lengthAdjust="spacingAndGlyphs">-40</text>
<text x="366.5" y="503.8" text-anchor="end" textLength="20.1" lengthAdjust="spacingAndGlyphs">-60</text>
<text x="366.5" y="535.0" text-anchor="end" textLength="20.1" lengthAdjust="spacingAndGlyphs">-80</text>
<text x="366.5" y="566.2" text-anchor="end" textLength="27.7" lengthAdjust="spacingAndGlyphs">-100</text>
<text x="375.5" y="582.5" text-anchor="middle" textLength="7.5" lengthAdjust="spacingAndGlyphs">0</text>
<text x="442.6" y="582.5" text-anchor="middle" textLength="22.6" lengthAdjust="spacingAndGlyphs">500</text>
<text x="508.4" y="582.5" text-anchor="middle" textLength="30.2" lengthAdjust="spacingAndGlyphs">1000</text>
<text x="574.2" y="582.5" text-anchor="middle" textLength="30.2" lengthAdjust="spacingAndGlyphs">1500</text>
<text x="640.0" y="582.5" text-anchor="middle" textLength="30.2" lengthAdjust="spacingAndGlyphs">2000</text>
<text x="705.8" y="582.5" text-anchor="middle" textLength="30.2" lengthAdjust="spacingAndGlyphs">2500</text>
<text x="771.6" y="582.5" text-anchor="middle" textLength="30.2" lengthAdjust="spacingAndGlyphs">3000</text>
<text x="572.5" y="595.2" text-anchor="middle" textLength="77.5" lengthAdjust="spacingAndGlyphs">Частота [Гц]</text>
<text x="546.0" y="396.5" text-anchor="middle" textLength="43.0" lengthAdjust="spacingAndGlyphs">Спектр</text>
<text transform="translate(329.2,483.3) rotate(-90)" text-anchor="middle" textLength="96.2" lengthAdjust="spacingAndGlyphs">Амплитуда [дБ]</text>
    </g>
  </svg>
</div>
</body></html>
